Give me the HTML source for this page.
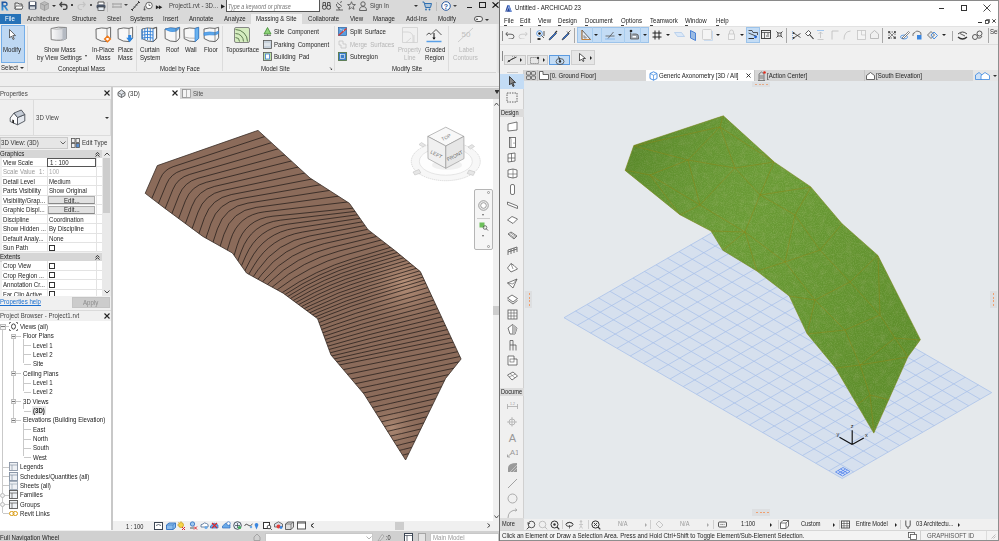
<!DOCTYPE html>
<html><head><meta charset="utf-8">
<style>
*{box-sizing:border-box;}
html,body{margin:0;padding:0;}
body{width:999px;height:541px;position:relative;overflow:hidden;background:#fff;font-family:"Liberation Sans",sans-serif;color:#222;}
.a{position:absolute;}
.t{position:absolute;white-space:pre;font-size:7px;line-height:9px;letter-spacing:0;color:#262626;transform:scaleX(.87);transform-origin:0 0;}
</style></head><body>

<!-- ================= REVIT ================= -->
<div class="a" id="rv" style="left:0;top:0;width:499px;height:541px;background:#f0f0f0;overflow:hidden;">
  <!-- title bar -->
  <div class="a" style="left:0;top:0;width:499px;height:13px;background:#d9d9d9;"></div>
  <!-- tab row -->
  <div class="a" style="left:0;top:13px;width:499px;height:11px;background:#d9d9d9;"></div>

  <!-- title bar content -->
  <svg class="a" style="left:1px;top:1px" width="8" height="10" viewBox="0 0 8 10"><defs><linearGradient id="rg" x1="0" y1="0" x2="0" y2="1"><stop offset="0" stop-color="#1b4f9c"/><stop offset="1" stop-color="#3d9be0"/></linearGradient></defs><path d="M0.5 9.5V0.5H4.5A2.6 2.6 0 0 1 4.8 5.6L7.6 9.5H5.4L3 5.8H2.4V9.5zM2.4 2.1V4.3H4.2A1.1 1.1 0 0 0 4.2 2.1z" fill="url(#rg)" fill-rule="evenodd"/></svg>
  <svg class="a" style="left:14px;top:1px" width="10" height="9" viewBox="0 0 10 9"><path d="M1 2h3l1 1h3v5H1z" fill="#e8e8e8" stroke="#555" stroke-width="1"/><path d="M2 5h7l-1 3H1z" fill="#fff" stroke="#555" stroke-width="0.8"/></svg>
  <svg class="a" style="left:28px;top:1px" width="9" height="9" viewBox="0 0 9 9"><rect x="0.5" y="0.5" width="8" height="8" rx="1" fill="#4a5568"/><rect x="2" y="1" width="5" height="3" fill="#fff"/><rect x="2" y="5.5" width="5" height="2.5" fill="#cfd5dc"/></svg>
  <svg class="a" style="left:40px;top:1px" width="9" height="10" viewBox="0 0 9 10"><path d="M4.5 0.5L8.5 2.5V7.5L4.5 9.5L0.5 7.5V2.5z" fill="#bbb" stroke="#999" stroke-width="0.6"/><path d="M4.5 4.5V9.5M0.5 2.5L4.5 4.5L8.5 2.5" stroke="#888" stroke-width="0.6" fill="none"/></svg>
  <div class="a" style="left:52px;top:5px;width:0;height:0;border-left:2px solid transparent;border-right:2px solid transparent;border-top:2px solid #333;"></div>
  <svg class="a" style="left:59px;top:1px" width="9" height="9" viewBox="0 0 9 9"><path d="M3 1L0.8 3.5L3 6M1 3.5H5.5A2.5 2.5 0 0 1 5.5 8.5H4" fill="none" stroke="#444" stroke-width="1.3"/></svg>
  <div class="a" style="left:71px;top:4px;width:2px;height:2px;background:#444;"></div>
  <svg class="a" style="left:77px;top:1px" width="9" height="9" viewBox="0 0 9 9"><path d="M6 1L8.2 3.5L6 6M8 3.5H3.5A2.5 2.5 0 0 0 3.5 8.5H5" fill="none" stroke="#c4c4c4" stroke-width="1.2"/></svg>
  <div class="a" style="left:90px;top:4px;width:2px;height:2px;background:#555;"></div>
  <svg class="a" style="left:96px;top:1px" width="10" height="10" viewBox="0 0 10 10"><path d="M2 3.5V1h6v2.5" fill="#fff" stroke="#444" stroke-width="0.9"/><rect x="0.5" y="3.5" width="9" height="4" rx="1.5" fill="#4a5568"/><rect x="2" y="6" width="6" height="3.5" fill="#e6eef6" stroke="#444" stroke-width="0.7"/></svg>
  <div class="a" style="left:107px;top:2px;width:1px;height:10px;background:#c2c2c2;"></div>
  <svg class="a" style="left:112px;top:2px" width="10" height="8" viewBox="0 0 10 8"><path d="M0 2h10M0 5h10" stroke="#999" stroke-width="1.2"/><path d="M1 1v5M9 1v5" stroke="#aaa" stroke-width="0.8"/></svg>
  <div class="a" style="left:124px;top:4px;width:0;height:0;border-left:2px solid transparent;border-right:2px solid transparent;border-top:2px solid #444;"></div>
  <svg class="a" style="left:131px;top:1px" width="9" height="10" viewBox="0 0 9 10"><path d="M1 9L8 1" stroke="#333" stroke-width="1"/><path d="M0 8l2 2M7 0l2 2M3 5.5l1 1M5 3.5l1 1" stroke="#333" stroke-width="0.9"/></svg>
  <svg class="a" style="left:143px;top:1px" width="10" height="10" viewBox="0 0 10 10"><circle cx="6" cy="4.5" r="3.3" fill="#fff" stroke="#555" stroke-width="0.9"/><path d="M6 2.5v2h1.5" stroke="#555" stroke-width="0.8" fill="none"/><path d="M2.5 4.5A3 3 0 0 0 1.5 8" stroke="#777" stroke-width="1" fill="none"/><circle cx="1.5" cy="8.5" r="1" fill="#555"/></svg>
  <div class="t" style="left:156px;top:2px;font-size:7px;font-weight:bold;color:#222">&#9656;&#9656;</div>
  <div class="t" style="left:169px;top:1px;font-size:7px;line-height:10px;color:#444;">Project1.rvt - 3D...</div>
  <div class="t" style="left:221px;top:2px;font-size:6px;color:#222">&#9654;</div>
  <div class="a" style="left:226px;top:0px;width:94px;height:12px;background:#fff;border:1px solid #555;border-top:none;"></div>
  <div class="t" style="left:228px;top:1.5px;font-size:7px;line-height:10px;color:#777;font-style:italic;transform:scaleX(.78)">Type a keyword or phrase</div>
  <svg class="a" style="left:322px;top:1px" width="9" height="9" viewBox="0 0 9 9"><circle cx="2.3" cy="6.3" r="2" fill="none" stroke="#444" stroke-width="1"/><circle cx="6.7" cy="6.3" r="2" fill="none" stroke="#444" stroke-width="1"/><path d="M1 5V1.5h2.5V5M5.5 5V1.5H8V5" fill="none" stroke="#444" stroke-width="0.9"/></svg>
  <svg class="a" style="left:335px;top:1px" width="9" height="10" viewBox="0 0 9 10"><path d="M1 9h7M4.5 9L3 6M2 1.5l5 4M1.5 3a3 3 0 0 0 4 3.5" fill="none" stroke="#555" stroke-width="0.9"/><path d="M5 1.5l2-1" stroke="#555" stroke-width="0.9"/></svg>
  <svg class="a" style="left:347px;top:1px" width="9" height="9" viewBox="0 0 10 10"><path d="M5 0.8L6.2 3.8L9.4 4L6.9 6L7.8 9.2L5 7.4L2.2 9.2L3.1 6L0.6 4L3.8 3.8z" fill="none" stroke="#555" stroke-width="0.9"/></svg>
  <svg class="a" style="left:359px;top:1px" width="8" height="10" viewBox="0 0 8 10"><circle cx="4" cy="3" r="2.2" fill="none" stroke="#555" stroke-width="0.9"/><path d="M0.5 9.5C0.5 6.5 2 5.6 4 5.6S7.5 6.5 7.5 9.5z" fill="none" stroke="#555" stroke-width="0.9"/></svg>
  <div class="t" style="left:370px;top:1px;font-size:7px;line-height:10px;color:#444;">Sign In</div>
  <div class="a" style="left:414px;top:5px;width:0;height:0;border-left:2px solid transparent;border-right:2px solid transparent;border-top:2px solid #333;"></div>
  <svg class="a" style="left:422px;top:1px" width="10" height="10" viewBox="0 0 10 10"><path d="M0.5 1h1.5l1.5 5.5h5L9.5 2.5H2.8" fill="#5a9bd8" fill-opacity="0.35" stroke="#2f6fb0" stroke-width="1"/><circle cx="4" cy="8.5" r="0.9" fill="#2f6fb0"/><circle cx="7.5" cy="8.5" r="0.9" fill="#2f6fb0"/></svg>
  <div class="a" style="left:436px;top:2px;width:1px;height:9px;background:#bdbdbd;"></div>
  <svg class="a" style="left:441px;top:1px" width="10" height="10" viewBox="0 0 10 10"><circle cx="5" cy="5" r="4.3" fill="#fff" stroke="#2a5aa0" stroke-width="1"/><text x="5" y="7.8" font-size="7" font-family="Liberation Sans" font-weight="bold" text-anchor="middle" fill="#2a5aa0">?</text></svg>
  <div class="a" style="left:453px;top:5px;width:0;height:0;border-left:2px solid transparent;border-right:2px solid transparent;border-top:2px solid #444;"></div>
  <div class="a" style="left:467px;top:6.5px;width:5px;height:1.2px;background:#222;"></div>
  <div class="a" style="left:479px;top:2px;width:6.5px;height:6px;border:0.9px solid #222;"></div>
  <svg class="a" style="left:492px;top:1.5px" width="7" height="6" viewBox="0 0 7 6"><path d="M0.5 0.3L6.5 5.7M6.5 0.3L0.5 5.7" stroke="#111" stroke-width="1.1"/></svg>

  <!-- tab row -->
  <div class="a" style="left:0;top:14px;width:21px;height:10px;background:#2672b8;"></div>
  <div class="t" style="left:5px;top:14px;font-size:7px;line-height:10px;color:#fff;letter-spacing:0">File</div>
  <div class="a" style="left:251px;top:14px;width:51px;height:11px;background:#f0f0f0;"></div>
  <div class="t" style="left:27px;top:14px;line-height:10px;">Architecture</div>
  <div class="t" style="left:72px;top:14px;line-height:10px;">Structure</div>
  <div class="t" style="left:107px;top:14px;line-height:10px;">Steel</div>
  <div class="t" style="left:130px;top:14px;line-height:10px;">Systems</div>
  <div class="t" style="left:163px;top:14px;line-height:10px;">Insert</div>
  <div class="t" style="left:189px;top:14px;line-height:10px;">Annotate</div>
  <div class="t" style="left:224px;top:14px;line-height:10px;">Analyze</div>
  <div class="t" style="left:256px;top:14px;line-height:10px;color:#222">Massing &amp; Site</div>
  <div class="t" style="left:308px;top:14px;line-height:10px;">Collaborate</div>
  <div class="t" style="left:350px;top:14px;line-height:10px;">View</div>
  <div class="t" style="left:373px;top:14px;line-height:10px;">Manage</div>
  <div class="t" style="left:406px;top:14px;line-height:10px;">Add-Ins</div>
  <div class="t" style="left:438px;top:14px;line-height:10px;">Modify</div>
  <div class="a" style="left:474px;top:16px;width:9px;height:5.5px;border:0.9px solid #555;border-radius:3px;background:#f4f4f4;"></div>
  <div class="a" style="left:476px;top:18px;width:0;height:0;border-left:1.5px solid transparent;border-right:1.5px solid transparent;border-bottom:2px solid #333;"></div>
  <div class="a" style="left:485px;top:19px;width:0;height:0;border-left:2px solid transparent;border-right:2px solid transparent;border-top:2px solid #333;"></div>
  <!-- ribbon -->
  <div class="a" style="left:0;top:24px;width:499px;height:49px;background:#f0f0f0;border-bottom:1px solid #d5d5d5;"></div>

  <!-- ribbon content -->
  <div class="a" style="left:1px;top:25px;width:24px;height:38px;background:#bed8f3;border:1px solid #74aee9;"></div>
  <svg class="a" style="left:9px;top:29px" width="7" height="11" viewBox="0 0 7 11"><path d="M0.5 0.5V9L2.5 7L4 10.5L5.2 10L3.8 6.6H6.5z" fill="#fff" stroke="#444" stroke-width="0.8"/></svg>
  <div class="t" style="left:3px;top:45px;">Modify</div>
  <div class="t" style="left:1px;top:63px;">Select</div>
  <div class="a" style="left:20px;top:67px;width:0;height:0;border-left:2px solid transparent;border-right:2px solid transparent;border-top:2.5px solid #333;"></div>
  <div class="a" style="left:27px;top:26px;width:1px;height:45px;background:#dcdcdc;"></div>
  <svg class="a" style="left:50px;top:26px" width="18" height="17" viewBox="0 0 18 17"><defs><linearGradient id="gm" x1="0" x2="1"><stop offset="0" stop-color="#fafafa"/><stop offset="1" stop-color="#c9ccd2"/></linearGradient></defs><path d="M1 2.5Q8 0.3 16.5 1.5V12.5Q12 15.5 1.2 13.6z" fill="url(#gm)" stroke="#777" stroke-width="0.9"/><path d="M12.5 2.6V15L16.5 12.5V1.5z" fill="#b5bac2"/><path d="M1.2 2.5Q6 4 12.5 2.6" fill="none" stroke="#999" stroke-width="0.6"/></svg>
  <div class="t" style="left:44px;top:45px;">Show Mass</div>
  <div class="t" style="left:37px;top:53px;">by View Settings</div>
  <div class="a" style="left:85px;top:55px;width:0;height:0;border-left:1.5px solid transparent;border-right:1.5px solid transparent;border-top:2px solid #333;"></div>
  <svg class="a" style="left:95px;top:26px" width="17" height="17" viewBox="0 0 17 17"><path d="M1 3Q6.5 1.2 12 2.4L15.6 1.3V11.8Q14.5 14.2 12 15.6Q6 16 1.2 12.6z" fill="#f7f7f7" stroke="#5a5a5a" stroke-width="0.9" stroke-linejoin="round"/><path d="M12 2.4V15.6" fill="none" stroke="#6a6a6a" stroke-width="0.7"/><path d="M12.5 10.2l2.8 2.8-2.8 2.8-2.8-2.8z" fill="#fff" stroke="#f07a1a" stroke-width="1.5"/></svg>
  <div class="t" style="left:92px;top:45px;">In-Place</div>
  <div class="t" style="left:96px;top:53px;">Mass</div>
  <svg class="a" style="left:117px;top:26px" width="17" height="17" viewBox="0 0 17 17"><path d="M1 3Q6.5 1.2 12 2.4L15.6 1.3V11.8Q14.5 14.2 12 15.6Q6 16 1.2 12.6z" fill="#f7f7f7" stroke="#5a5a5a" stroke-width="0.9" stroke-linejoin="round"/><path d="M12 2.4V15.6" fill="none" stroke="#6a6a6a" stroke-width="0.7"/><path d="M11.2 9h3V11.8h2l-3.5 4.4-3.5-4.4h2z" fill="#2f87e0"/></svg>
  <div class="t" style="left:118px;top:45px;">Place</div>
  <div class="t" style="left:118px;top:53px;">Mass</div>
  <div class="t" style="left:58px;top:64px;">Conceptual Mass</div>
  <div class="a" style="left:136px;top:26px;width:1px;height:45px;background:#dcdcdc;"></div>
  <svg class="a" style="left:141px;top:26px" width="17" height="17" viewBox="0 0 17 17"><path d="M1 3Q6.5 1.2 12 2.4L15.6 1.3V11.8Q14.5 14.2 12 15.6Q6 16 1.2 12.6z" fill="#f7f7f7" stroke="#5a5a5a" stroke-width="0.9" stroke-linejoin="round"/><path d="M3.8 2.3V14M6.5 1.9V14.2M9.3 2.1V14.8M1 6.2Q6.5 4.5 12 5.8M1 9.2Q6.5 7.8 12 9M1 12Q6.5 10.8 12 12" fill="none" stroke="#2f7fd8" stroke-width="0.9"/><path d="M1 3.2V13.6M12 2.6V15.6" stroke="#2f7fd8" stroke-width="1"/><path d="M12 2.6L15.6 1.4V12.6L12 15.6" fill="none" stroke="#5a5a5a" stroke-width="0.8"/></svg>
  <svg class="a" style="left:164px;top:26px" width="17" height="17" viewBox="0 0 17 17"><path d="M1 3Q6.5 1.2 12 2.4L15.6 1.3V11.8Q14.5 14.2 12 15.6Q6 16 1.2 12.6z" fill="#f7f7f7" stroke="#5a5a5a" stroke-width="0.9" stroke-linejoin="round"/><path d="M1 3.2Q6.5 1 12 2.6L15.6 1.4Q13.5 4.8 12 5.2Q6.5 6.8 1 3.2z" fill="#5aa7ea" stroke="#2f7fd8" stroke-width="0.6"/><path d="M12 2.4V15.6" fill="none" stroke="#6a6a6a" stroke-width="0.7"/></svg>
  <svg class="a" style="left:183px;top:26px" width="17" height="17" viewBox="0 0 17 17"><path d="M1 3Q6.5 1.2 12 2.4L15.6 1.3V11.8Q14.5 14.2 12 15.6Q6 16 1.2 12.6z" fill="#f7f7f7" stroke="#5a5a5a" stroke-width="0.9" stroke-linejoin="round"/><path d="M12 2.6L15.6 1.4V12.6L12 15.6z" fill="#6ab2ee" stroke="#2f7fd8" stroke-width="0.7"/><path d="M1.2 11Q6.5 12.6 12 12.2" fill="none" stroke="#8a8a8a" stroke-width="0.6"/></svg>
  <svg class="a" style="left:203px;top:26px" width="17" height="17" viewBox="0 0 17 17"><path d="M1 3Q6.5 1.2 12 2.4L15.6 1.3V11.8Q14.5 14.2 12 15.6Q6 16 1.2 12.6z" fill="#f7f7f7" stroke="#5a5a5a" stroke-width="0.9" stroke-linejoin="round"/><path d="M1 6.8Q6.5 5.2 12 6.6L15.6 5.2V7.4L12 9Q6.5 8.4 1 9.4z" fill="#5aa7ea" stroke="#2f7fd8" stroke-width="0.6"/><path d="M12 2.4V15.6" fill="none" stroke="#6a6a6a" stroke-width="0.7"/></svg>
  <div class="t" style="left:140px;top:45px;">Curtain</div>
  <div class="t" style="left:140px;top:53px;">System</div>
  <div class="t" style="left:166px;top:45px;">Roof</div>
  <div class="t" style="left:185px;top:45px;">Wall</div>
  <div class="t" style="left:204px;top:45px;">Floor</div>
  <div class="t" style="left:160px;top:64px;">Model by Face</div>
  <div class="a" style="left:222px;top:26px;width:1px;height:45px;background:#dcdcdc;"></div>
  <svg class="a" style="left:234px;top:27px" width="16" height="16" viewBox="0 0 16 16"><rect x="0.5" y="0.5" width="15" height="15" rx="1.5" fill="#d5ecc0" stroke="#7a7a7a" stroke-width="0.9"/><path d="M1.5 10.5A4 4 0 0 1 5.5 14.5M1.5 6.5A8 8 0 0 1 9.5 14.5M1.5 2.5A12 12 0 0 1 13.5 14.5" fill="none" stroke="#5f7d52" stroke-width="1"/></svg>
  <div class="t" style="left:226px;top:45px;">Toposurface</div>
  <svg class="a" style="left:263px;top:27px" width="9" height="9" viewBox="0 0 9 9"><path d="M4.5 0.5L8 7H1z" fill="#8fd27a" stroke="#3c8a2e" stroke-width="0.8"/><path d="M4.5 7V8.8M1 8.5h7" stroke="#555" stroke-width="0.7"/></svg>
  <svg class="a" style="left:263px;top:40px" width="9" height="9" viewBox="0 0 9 9"><rect x="0.5" y="0.5" width="8" height="8" fill="#c8d2dc" stroke="#555" stroke-width="0.8"/><path d="M2 3v3M4 3v3M6 3v3" stroke="#fff" stroke-width="0.8"/></svg>
  <svg class="a" style="left:263px;top:52px" width="9" height="9" viewBox="0 0 9 9"><rect x="0.5" y="0.5" width="8" height="8" fill="#bfe3a8" stroke="#555" stroke-width="0.8"/><rect x="2.5" y="2" width="4" height="5" fill="#fff" stroke="#3a7bd5" stroke-width="0.8"/></svg>
  <div class="t" style="left:274px;top:27px;word-spacing:1.5px">Site Component</div>
  <div class="t" style="left:274px;top:40px;word-spacing:1.5px">Parking Component</div>
  <div class="t" style="left:274px;top:52px;word-spacing:1.5px">Building Pad</div>
  <div class="t" style="left:261px;top:64px;">Model Site</div>
  <div class="t" style="left:329px;top:64px;font-size:5px;">&#8600;</div>
  <div class="a" style="left:334px;top:26px;width:1px;height:45px;background:#dcdcdc;"></div>
  <svg class="a" style="left:338px;top:27px" width="9" height="9" viewBox="0 0 9 9"><rect x="0.5" y="0.5" width="8" height="8" fill="#5a9fe0" stroke="#2a5f9e" stroke-width="0.7"/><path d="M0.5 8.5L8.5 1.5" stroke="#e0392a" stroke-width="1.2"/><path d="M2 2l2 1M5 2.5l1 2" stroke="#fff" stroke-width="0.6"/></svg>
  <svg class="a" style="left:338px;top:40px" width="9" height="9" viewBox="0 0 9 9"><path d="M1 1h4v3H8v4H3V5H1z" fill="none" stroke="#c8c8c8" stroke-width="0.9"/></svg>
  <svg class="a" style="left:338px;top:52px" width="9" height="9" viewBox="0 0 9 9"><rect x="0.5" y="0.5" width="8" height="8" fill="#3d7fc8" stroke="#5a7a4a" stroke-width="0.9"/><rect x="2.5" y="2.5" width="4" height="4" fill="none" stroke="#fff" stroke-width="0.6"/></svg>
  <div class="t" style="left:350px;top:27px;word-spacing:1.5px">Split Surface</div>
  <div class="t" style="left:350px;top:40px;word-spacing:1.5px;color:#b5b5b5">Merge Surfaces</div>
  <div class="t" style="left:350px;top:52px;">Subregion</div>
  <svg class="a" style="left:402px;top:27px" width="16" height="16" viewBox="0 0 16 16"><path d="M0.5 0.5H15.5V15.5H0.5z" fill="none" stroke="#cfcfcf" stroke-width="0.8"/><path d="M0.5 5H6A5 5 0 0 1 11 10V15.5M4 15.5L9 11M12 8V15.5" fill="none" stroke="#cfcfcf" stroke-width="0.8"/></svg>
  <div class="t" style="left:398px;top:45px;color:#b8b8b8">Property</div>
  <div class="t" style="left:404px;top:53px;color:#b8b8b8">Line</div>
  <svg class="a" style="left:426px;top:28px" width="16" height="15" viewBox="0 0 16 15"><path d="M0.5 7L3 5L5 6.5L10 1.5L15.5 7" fill="none" stroke="#444" stroke-width="0.9"/><path d="M8 5V11" stroke="#111" stroke-width="1"/><path d="M6.3 9.5L8 11.8L9.7 9.5z" fill="#111"/><path d="M0.5 13.5H15.5" stroke="#5aa0e8" stroke-width="1.5"/></svg>
  <div class="t" style="left:425px;top:45px;">Graded</div>
  <div class="t" style="left:425px;top:53px;">Region</div>
  <div class="t" style="left:392px;top:64px;">Modify Site</div>
  <div class="a" style="left:448px;top:26px;width:1px;height:45px;background:#dcdcdc;"></div>
  <svg class="a" style="left:457px;top:27px" width="17" height="16" viewBox="0 0 17 16"><path d="M1 15L16 1" stroke="#c8c8c8" stroke-width="0.9"/><text x="9" y="10" font-size="8" font-family="Liberation Sans" text-anchor="middle" fill="#c0c0c0">50</text></svg>
  <div class="t" style="left:459px;top:45px;color:#b8b8b8">Label</div>
  <div class="t" style="left:453px;top:53px;color:#b8b8b8">Contours</div>
  <div class="a" style="left:496px;top:24px;width:3px;height:49px;background:linear-gradient(90deg,#f0f0f0,#dedede);"></div>
  <!-- band -->
  <div class="a" style="left:0;top:73px;width:499px;height:14px;background:#eeeeee;border-bottom:1px solid #cfcfcf;"></div>
  <!-- properties -->
  <div class="a" style="left:0;top:87px;width:112px;height:443px;background:#f0f0f0;"></div>
  <!-- project browser body -->
  <div class="a" style="left:0;top:321px;width:111px;height:209px;background:#fff;"></div>

  <!-- properties header -->
  <div class="t" style="left:0;top:89px;line-height:10px;color:#444">Properties</div>
  <svg class="a" style="left:104px;top:90px" width="6" height="6" viewBox="0 0 6 6"><path d="M0.5 0.5L5.5 5.5M5.5 0.5L0.5 5.5" stroke="#222" stroke-width="1.1"/></svg>
  <div class="a" style="left:0;top:99px;width:111px;height:37px;border:1px solid #dcdcdc;background:#f0f0f0;"></div>
  <div class="a" style="left:0;top:100px;width:34px;height:35px;border-right:1px solid #dcdcdc;background:#efefef;"></div>
  <svg class="a" style="left:9px;top:109px" width="17" height="17" viewBox="0 0 17 17"><path d="M8.5 8.5L15.8 5.5V12L8.5 15.8z" fill="#e4e8ee" stroke="#4a4f57" stroke-width="0.9" stroke-linejoin="round"/><path d="M1.2 9L5 4L8.5 8.5V15.8L1.2 12.5z" fill="#fbfbfc" stroke="#4a4f57" stroke-width="0.9" stroke-linejoin="round"/><path d="M5 4L12.3 1L15.8 5.5L8.5 8.5z" fill="#c5ccd6" stroke="#4a4f57" stroke-width="0.9" stroke-linejoin="round"/><path d="M3.3 10.5L5 11.2V14.5L3.3 13.7z" fill="#222"/></svg>
  <div class="t" style="left:36px;top:113px;color:#444">3D View</div>
  <div class="a" style="left:105px;top:117px;width:0;height:0;border-left:2px solid transparent;border-right:2px solid transparent;border-top:2.5px solid #333;"></div>
  <div class="a" style="left:0;top:137px;width:68px;height:12px;background:#e6e6e6;border:1px solid #c9c9c9;"></div>
  <div class="t" style="left:1px;top:138px;line-height:10px;color:#333">3D View: (3D)</div>
  <svg class="a" style="left:60px;top:141px" width="6" height="4" viewBox="0 0 6 4"><path d="M0.5 0.5L3 3L5.5 0.5" fill="none" stroke="#555" stroke-width="0.9"/></svg>
  <svg class="a" style="left:71px;top:138px" width="9" height="10" viewBox="0 0 9 10"><rect x="0.5" y="0.5" width="3.5" height="4" fill="none" stroke="#555" stroke-width="0.8"/><rect x="5" y="0.5" width="3.5" height="4" fill="none" stroke="#555" stroke-width="0.8"/><rect x="0.5" y="5.5" width="3.5" height="4" fill="none" stroke="#555" stroke-width="0.8"/><rect x="5" y="5.5" width="3.5" height="4" fill="#5b8fd0" stroke="#555" stroke-width="0.8"/></svg>
  <div class="t" style="left:82px;top:138px;line-height:10px;color:#333">Edit Type</div>
  <!-- grid -->
  <div class="a" style="left:0;top:150px;width:102px;height:146px;background:#f0f0f0;"></div>
  <div class="a" style="left:0;top:150px;width:102px;height:8px;background:#d6d6d6;"></div>
  <div class="t" style="left:0;top:149px;color:#222">Graphics</div>
  <svg class="a" style="left:95px;top:151.5px" width="5" height="5" viewBox="0 0 5 5"><path d="M0.5 2.3L2.5 0.5L4.5 2.3M0.5 4.5L2.5 2.7L4.5 4.5" fill="none" stroke="#222" stroke-width="0.9"/></svg>
  <div class="a" style="left:2px;top:158.0px;width:100px;height:9.45px;background:#fff;border-bottom:1px solid #e3e3e3;"></div>
  <div class="a" style="left:47px;top:158.0px;width:1px;height:9.45px;background:#e3e3e3;"></div>
  <div class="a" style="left:96px;top:158.0px;width:1px;height:9.45px;background:#e3e3e3;"></div>
  <div class="t" style="left:3px;top:158.0px;color:#222">View Scale</div>
  <div class="a" style="left:47px;top:158.0px;width:49px;height:9.45px;border:1px solid #555;background:#fff;"></div>
  <div class="t" style="left:50px;top:158.0px;">1 : 100</div>
  <div class="a" style="left:2px;top:167.4px;width:100px;height:9.45px;background:#fff;border-bottom:1px solid #e3e3e3;"></div>
  <div class="a" style="left:47px;top:167.4px;width:1px;height:9.45px;background:#e3e3e3;"></div>
  <div class="a" style="left:96px;top:167.4px;width:1px;height:9.45px;background:#e3e3e3;"></div>
  <div class="t" style="left:3px;top:167.4px;color:#999">Scale Value</div><div class="t" style="left:39px;top:167.4px;color:#999">1:</div>
  <div class="t" style="left:49px;top:167.4px;color:#aaa">100</div>
  <div class="a" style="left:2px;top:176.9px;width:100px;height:9.45px;background:#fff;border-bottom:1px solid #e3e3e3;"></div>
  <div class="a" style="left:47px;top:176.9px;width:1px;height:9.45px;background:#e3e3e3;"></div>
  <div class="a" style="left:96px;top:176.9px;width:1px;height:9.45px;background:#e3e3e3;"></div>
  <div class="t" style="left:3px;top:176.9px;color:#222">Detail Level</div>
  <div class="t" style="left:49px;top:176.9px;">Medium</div>
  <div class="a" style="left:2px;top:186.3px;width:100px;height:9.45px;background:#fff;border-bottom:1px solid #e3e3e3;"></div>
  <div class="a" style="left:47px;top:186.3px;width:1px;height:9.45px;background:#e3e3e3;"></div>
  <div class="a" style="left:96px;top:186.3px;width:1px;height:9.45px;background:#e3e3e3;"></div>
  <div class="t" style="left:3px;top:186.3px;color:#222">Parts Visibility</div>
  <div class="t" style="left:49px;top:186.3px;">Show Original</div>
  <div class="a" style="left:2px;top:195.8px;width:100px;height:9.45px;background:#fff;border-bottom:1px solid #e3e3e3;"></div>
  <div class="a" style="left:47px;top:195.8px;width:1px;height:9.45px;background:#e3e3e3;"></div>
  <div class="a" style="left:96px;top:195.8px;width:1px;height:9.45px;background:#e3e3e3;"></div>
  <div class="t" style="left:3px;top:195.8px;color:#222">Visibility/Grap...</div>
  <div class="a" style="left:48px;top:196.3px;width:47px;height:8px;background:#e1e1e1;border:1px solid #adadad;border-bottom-color:#888;"></div>
  <div class="t" style="left:64px;top:195.5px;">Edit...</div>
  <div class="a" style="left:2px;top:205.2px;width:100px;height:9.45px;background:#fff;border-bottom:1px solid #e3e3e3;"></div>
  <div class="a" style="left:47px;top:205.2px;width:1px;height:9.45px;background:#e3e3e3;"></div>
  <div class="a" style="left:96px;top:205.2px;width:1px;height:9.45px;background:#e3e3e3;"></div>
  <div class="t" style="left:3px;top:205.2px;color:#222">Graphic Displ...</div>
  <div class="a" style="left:48px;top:205.7px;width:47px;height:8px;background:#e1e1e1;border:1px solid #adadad;border-bottom-color:#888;"></div>
  <div class="t" style="left:64px;top:204.9px;">Edit...</div>
  <div class="a" style="left:2px;top:214.7px;width:100px;height:9.45px;background:#fff;border-bottom:1px solid #e3e3e3;"></div>
  <div class="a" style="left:47px;top:214.7px;width:1px;height:9.45px;background:#e3e3e3;"></div>
  <div class="a" style="left:96px;top:214.7px;width:1px;height:9.45px;background:#e3e3e3;"></div>
  <div class="t" style="left:3px;top:214.7px;color:#222">Discipline</div>
  <div class="t" style="left:49px;top:214.7px;">Coordination</div>
  <div class="a" style="left:2px;top:224.1px;width:100px;height:9.45px;background:#fff;border-bottom:1px solid #e3e3e3;"></div>
  <div class="a" style="left:47px;top:224.1px;width:1px;height:9.45px;background:#e3e3e3;"></div>
  <div class="a" style="left:96px;top:224.1px;width:1px;height:9.45px;background:#e3e3e3;"></div>
  <div class="t" style="left:3px;top:224.1px;color:#222">Show Hidden ...</div>
  <div class="t" style="left:49px;top:224.1px;">By Discipline</div>
  <div class="a" style="left:2px;top:233.6px;width:100px;height:9.45px;background:#fff;border-bottom:1px solid #e3e3e3;"></div>
  <div class="a" style="left:47px;top:233.6px;width:1px;height:9.45px;background:#e3e3e3;"></div>
  <div class="a" style="left:96px;top:233.6px;width:1px;height:9.45px;background:#e3e3e3;"></div>
  <div class="t" style="left:3px;top:233.6px;color:#222">Default Analy...</div>
  <div class="t" style="left:49px;top:233.6px;">None</div>
  <div class="a" style="left:2px;top:243.0px;width:100px;height:9.45px;background:#fff;border-bottom:1px solid #e3e3e3;"></div>
  <div class="a" style="left:47px;top:243.0px;width:1px;height:9.45px;background:#e3e3e3;"></div>
  <div class="a" style="left:96px;top:243.0px;width:1px;height:9.45px;background:#e3e3e3;"></div>
  <div class="t" style="left:3px;top:243.0px;color:#222">Sun Path</div>
  <div class="a" style="left:49px;top:244.5px;width:6px;height:6px;border:1px solid #333;background:#fff;"></div>
  <div class="a" style="left:0;top:252.5px;width:102px;height:9px;background:#d6d6d6;"></div>
  <div class="t" style="left:0;top:252.0px;color:#222">Extents</div>
  <svg class="a" style="left:95px;top:254.5px" width="5" height="5" viewBox="0 0 5 5"><path d="M0.5 2.3L2.5 0.5L4.5 2.3M0.5 4.5L2.5 2.7L4.5 4.5" fill="none" stroke="#222" stroke-width="0.9"/></svg>
  <div class="a" style="left:2px;top:261.3px;width:100px;height:9.45px;background:#fff;border-bottom:1px solid #e3e3e3;"></div>
  <div class="a" style="left:47px;top:261.3px;width:1px;height:9.45px;background:#e3e3e3;"></div>
  <div class="a" style="left:96px;top:261.3px;width:1px;height:9.45px;background:#e3e3e3;"></div>
  <div class="t" style="left:3px;top:261.3px;color:#222">Crop View</div>
  <div class="a" style="left:49px;top:262.8px;width:6px;height:6px;border:1px solid #333;background:#fff;"></div>
  <div class="a" style="left:2px;top:270.7px;width:100px;height:9.45px;background:#fff;border-bottom:1px solid #e3e3e3;"></div>
  <div class="a" style="left:47px;top:270.7px;width:1px;height:9.45px;background:#e3e3e3;"></div>
  <div class="a" style="left:96px;top:270.7px;width:1px;height:9.45px;background:#e3e3e3;"></div>
  <div class="t" style="left:3px;top:270.7px;color:#222">Crop Region ...</div>
  <div class="a" style="left:49px;top:272.2px;width:6px;height:6px;border:1px solid #333;background:#fff;"></div>
  <div class="a" style="left:2px;top:280.2px;width:100px;height:9.45px;background:#fff;border-bottom:1px solid #e3e3e3;"></div>
  <div class="a" style="left:47px;top:280.2px;width:1px;height:9.45px;background:#e3e3e3;"></div>
  <div class="a" style="left:96px;top:280.2px;width:1px;height:9.45px;background:#e3e3e3;"></div>
  <div class="t" style="left:3px;top:280.2px;color:#222">Annotation Cr...</div>
  <div class="a" style="left:49px;top:281.7px;width:6px;height:6px;border:1px solid #333;background:#fff;"></div>
  <div class="a" style="left:2px;top:289.6px;width:100px;height:9.45px;background:#fff;border-bottom:1px solid #e3e3e3;"></div>
  <div class="a" style="left:47px;top:289.6px;width:1px;height:9.45px;background:#e3e3e3;"></div>
  <div class="a" style="left:96px;top:289.6px;width:1px;height:9.45px;background:#e3e3e3;"></div>
  <div class="t" style="left:3px;top:289.6px;color:#222">Far Clip Active</div>
  <div class="a" style="left:49px;top:291.1px;width:6px;height:6px;border:1px solid #333;background:#fff;"></div>
  <div class="a" style="left:102px;top:150px;width:9px;height:146px;background:#e9e9e9;"></div>
  <div class="a" style="left:103px;top:158px;width:7px;height:55px;background:#cdcdcd;"></div>
  <svg class="a" style="left:104px;top:152px" width="6" height="4" viewBox="0 0 6 4"><path d="M0.5 3.5L3 1L5.5 3.5" fill="none" stroke="#333" stroke-width="0.9"/></svg>
  <svg class="a" style="left:104px;top:290px" width="6" height="4" viewBox="0 0 6 4"><path d="M0.5 0.5L3 3L5.5 0.5" fill="none" stroke="#333" stroke-width="0.9"/></svg>
  <div class="a" style="left:0;top:296px;width:111px;height:14px;background:#f0f0f0;"></div>
  <div class="t" style="left:0;top:297px;line-height:10px;color:#1a6fd0;text-decoration:underline">Properties help</div>
  <div class="a" style="left:72px;top:297px;width:38px;height:11px;background:#cccccc;border:1px solid #c4c4c4;"></div>
  <div class="t" style="left:83px;top:297.5px;line-height:10px;color:#8a8a8a">Apply</div>
  <div class="a" style="left:0;top:310px;width:111px;height:1px;background:#dadada;"></div>
  <div class="t" style="left:0;top:311px;line-height:10px;color:#444">Project Browser - Project1.rvt</div>
  <svg class="a" style="left:104px;top:313px" width="6" height="6" viewBox="0 0 6 6"><path d="M0.5 0.5L5.5 5.5M5.5 0.5L0.5 5.5" stroke="#222" stroke-width="1.1"/></svg>
  <!-- tree -->
  <div class="a" style="left:2px;top:330px;width:1px;height:183px;background:#c9c9c9;"></div>
  <div class="a" style="left:13px;top:339px;width:1px;height:80px;background:#c9c9c9;"></div>
  <div class="a" style="left:23px;top:339px;width:1px;height:24px;background:#c9c9c9;"></div>
  <div class="a" style="left:23px;top:376px;width:1px;height:15px;background:#c9c9c9;"></div>
  <div class="a" style="left:23px;top:404px;width:1px;height:5px;background:#c9c9c9;"></div>
  <div class="a" style="left:23px;top:423px;width:1px;height:33px;background:#c9c9c9;"></div>
  <div class="a" style="left:3px;top:326.4px;width:6px;height:1px;background:#c9c9c9;"></div>
  <div class="a" style="left:0px;top:323.9px;width:6px;height:6px;background:#f4f4f4;border:1px solid #bdbdbd;"></div><div class="a" style="left:1px;top:326.4px;width:4px;height:1px;background:#777;"></div>
  <svg class="a" style="left:9px;top:322.4px" width="9" height="9" viewBox="0 0 9 9"><path d="M0.5 2V0.5H2M7 0.5H8.5V2M8.5 7V8.5H7M2 8.5H0.5V7" fill="none" stroke="#555" stroke-width="0.8"/><ellipse cx="4.5" cy="4.5" rx="2" ry="2.6" fill="none" stroke="#333" stroke-width="0.9"/></svg>
  <div class="t" style="left:20px;top:321.9px;color:#222">Views (all)</div>
  <div class="a" style="left:13px;top:335.8px;width:8px;height:1px;background:#c9c9c9;"></div>
  <div class="a" style="left:11px;top:333.8px;width:5px;height:5px;background:#f4f4f4;border:1px solid #bdbdbd;"></div><div class="a" style="left:12px;top:335.8px;width:3px;height:1px;background:#777;"></div>
  <div class="t" style="left:22.5px;top:331.2px;color:#222">Floor Plans</div>
  <div class="a" style="left:24px;top:345.1px;width:7px;height:1px;background:#c9c9c9;"></div>
  <div class="t" style="left:33px;top:340.6px;color:#222">Level 1</div>
  <div class="a" style="left:24px;top:354.4px;width:7px;height:1px;background:#c9c9c9;"></div>
  <div class="t" style="left:33px;top:349.9px;color:#222">Level 2</div>
  <div class="a" style="left:24px;top:363.8px;width:7px;height:1px;background:#c9c9c9;"></div>
  <div class="t" style="left:33px;top:359.3px;color:#222">Site</div>
  <div class="a" style="left:13px;top:373.1px;width:8px;height:1px;background:#c9c9c9;"></div>
  <div class="a" style="left:11px;top:371.1px;width:5px;height:5px;background:#f4f4f4;border:1px solid #bdbdbd;"></div><div class="a" style="left:12px;top:373.1px;width:3px;height:1px;background:#777;"></div>
  <div class="t" style="left:22.5px;top:368.6px;color:#222">Ceiling Plans</div>
  <div class="a" style="left:24px;top:382.5px;width:7px;height:1px;background:#c9c9c9;"></div>
  <div class="t" style="left:33px;top:378.0px;color:#222">Level 1</div>
  <div class="a" style="left:24px;top:391.8px;width:7px;height:1px;background:#c9c9c9;"></div>
  <div class="t" style="left:33px;top:387.3px;color:#222">Level 2</div>
  <div class="a" style="left:13px;top:401.2px;width:8px;height:1px;background:#c9c9c9;"></div>
  <div class="a" style="left:11px;top:399.2px;width:5px;height:5px;background:#f4f4f4;border:1px solid #bdbdbd;"></div><div class="a" style="left:12px;top:401.2px;width:3px;height:1px;background:#777;"></div>
  <div class="t" style="left:22.5px;top:396.7px;color:#222">3D Views</div>
  <div class="a" style="left:24px;top:410.5px;width:7px;height:1px;background:#c9c9c9;"></div>
  <div class="a" style="left:32px;top:406.0px;width:14px;height:9px;background:#e8e8e8;"></div>
  <div class="t" style="left:33px;top:406.0px;font-weight:bold;color:#222">(3D)</div>
  <div class="a" style="left:13px;top:419.9px;width:8px;height:1px;background:#c9c9c9;"></div>
  <div class="a" style="left:11px;top:417.9px;width:5px;height:5px;background:#f4f4f4;border:1px solid #bdbdbd;"></div><div class="a" style="left:12px;top:419.9px;width:3px;height:1px;background:#777;"></div>
  <div class="t" style="left:22.5px;top:415.4px;color:#222">Elevations (Building Elevation)</div>
  <div class="a" style="left:24px;top:429.2px;width:7px;height:1px;background:#c9c9c9;"></div>
  <div class="t" style="left:33px;top:424.8px;color:#222">East</div>
  <div class="a" style="left:24px;top:438.6px;width:7px;height:1px;background:#c9c9c9;"></div>
  <div class="t" style="left:33px;top:434.1px;color:#222">North</div>
  <div class="a" style="left:24px;top:447.9px;width:7px;height:1px;background:#c9c9c9;"></div>
  <div class="t" style="left:33px;top:443.4px;color:#222">South</div>
  <div class="a" style="left:24px;top:457.3px;width:7px;height:1px;background:#c9c9c9;"></div>
  <div class="t" style="left:33px;top:452.8px;color:#222">West</div>
  <div class="a" style="left:3px;top:466.6px;width:6px;height:1px;background:#c9c9c9;"></div>
  <svg class="a" style="left:9px;top:462.1px" width="9" height="9" viewBox="0 0 9 9"><rect x="0.5" y="0.5" width="8" height="8" fill="#eef1f5" stroke="#8a96a6" stroke-width="0.9"/><path d="M0.5 3H8.5M3 3V8.5" stroke="#8a96a6" stroke-width="0.7"/></svg>
  <div class="t" style="left:20px;top:462.1px;color:#222">Legends</div>
  <div class="a" style="left:3px;top:476.0px;width:6px;height:1px;background:#c9c9c9;"></div>
  <svg class="a" style="left:9px;top:471.5px" width="9" height="9" viewBox="0 0 9 9"><rect x="0.5" y="0.5" width="8" height="8" fill="#eef1f5" stroke="#7f8ea0" stroke-width="0.9"/><path d="M0.5 3H8.5M3 3V8.5" stroke="#7f8ea0" stroke-width="0.7"/></svg>
  <div class="t" style="left:20px;top:471.5px;color:#222">Schedules/Quantities (all)</div>
  <div class="a" style="left:3px;top:485.3px;width:6px;height:1px;background:#c9c9c9;"></div>
  <svg class="a" style="left:9px;top:480.8px" width="9" height="9" viewBox="0 0 9 9"><rect x="0.5" y="0.5" width="8" height="8" fill="#eef1f5" stroke="#9aa6b4" stroke-width="0.9"/><path d="M0.5 3H8.5M3 3V8.5" stroke="#9aa6b4" stroke-width="0.7"/></svg>
  <div class="t" style="left:20px;top:480.8px;color:#222">Sheets (all)</div>
  <div class="a" style="left:3px;top:494.7px;width:6px;height:1px;background:#c9c9c9;"></div>
  <svg class="a" style="left:9px;top:490.2px" width="9" height="9" viewBox="0 0 9 9"><rect x="0.5" y="0.5" width="8" height="8" fill="#eef1f5" stroke="#555" stroke-width="0.9"/><path d="M0.5 3H8.5M3 3V8.5" stroke="#555" stroke-width="0.7"/></svg>
  <div class="a" style="left:0px;top:492.7px;width:5px;height:5px;background:#f4f4f4;border:1px solid #bdbdbd;border-radius:50%;"></div>
  <div class="t" style="left:20px;top:490.2px;color:#222">Families</div>
  <div class="a" style="left:3px;top:504.0px;width:6px;height:1px;background:#c9c9c9;"></div>
  <svg class="a" style="left:9px;top:499.5px" width="9" height="9" viewBox="0 0 9 9"><rect x="0.5" y="0.5" width="8" height="8" fill="#eef1f5" stroke="#555" stroke-width="0.9"/><path d="M0.5 3H8.5M3 3V8.5" stroke="#555" stroke-width="0.7"/></svg>
  <div class="a" style="left:0px;top:502.0px;width:5px;height:5px;background:#f4f4f4;border:1px solid #bdbdbd;border-radius:50%;"></div>
  <div class="t" style="left:20px;top:499.5px;color:#222">Groups</div>
  <div class="a" style="left:3px;top:513.4px;width:6px;height:1px;background:#c9c9c9;"></div>
  <svg class="a" style="left:9px;top:510.9px" width="9" height="5" viewBox="0 0 9 5"><rect x="0.5" y="0.5" width="4.5" height="4" rx="2" fill="none" stroke="#d89a10" stroke-width="1"/><rect x="4" y="0.5" width="4.5" height="4" rx="2" fill="none" stroke="#d89a10" stroke-width="1"/></svg>
  <div class="t" style="left:20px;top:508.9px;color:#222">Revit Links</div>
  <div class="a" style="left:111px;top:87px;width:2px;height:443px;background:#c8c8c8;"></div>
  <!-- view tabs -->
  <div class="a" style="left:113px;top:88px;width:386px;height:11px;background:#cbcbcb;"></div>
  <div class="a" style="left:113px;top:88px;width:67px;height:11px;background:#fff;"></div>
  <div class="a" style="left:180px;top:88px;width:60px;height:11px;background:#d6d6d6;"></div>
  <!-- view area -->
  <div class="a" style="left:113px;top:99px;width:380px;height:422px;background:#fff;"></div>
  <div class="a" style="left:493px;top:99px;width:6px;height:422px;background:#f0f0f0;"></div>
  <!--TERRAIN_RV--><svg class="a" style="left:0;top:0" width="499" height="541" viewBox="0 0 499 541">
<defs><clipPath id="tc"><polygon points="258.0,130.4 310.0,178.0 349.4,203.3 368.0,229.7 395.8,251.3 420.3,271.6 461.1,359.0 445.6,378.4 405.6,460.0 364.0,394.0 331.0,355.0 317.6,318.7 283.2,293.2 246.5,273.0 232.4,253.0 202.8,236.4 164.0,207.7 145.2,193.3 157.3,165.6"/></clipPath>
<radialGradient id="tg1" cx="405" cy="283" r="50" gradientUnits="userSpaceOnUse"><stop offset="0" stop-color="#b8927a"/><stop offset="1" stop-color="#8b6b5a" stop-opacity="0"/></radialGradient>
<radialGradient id="tg2" cx="392" cy="428" r="32" gradientUnits="userSpaceOnUse"><stop offset="0" stop-color="#ad8a74"/><stop offset="1" stop-color="#8b6b5a" stop-opacity="0"/></radialGradient>
</defs>
<polygon points="258.0,130.4 310.0,178.0 349.4,203.3 368.0,229.7 395.8,251.3 420.3,271.6 461.1,359.0 445.6,378.4 405.6,460.0 364.0,394.0 331.0,355.0 317.6,318.7 283.2,293.2 246.5,273.0 232.4,253.0 202.8,236.4 164.0,207.7 145.2,193.3 157.3,165.6" fill="#8b6b5a"/>
<g clip-path="url(#tc)"><rect x="0" y="0" width="499" height="541" fill="url(#tg1)"/><rect x="0" y="0" width="499" height="541" fill="url(#tg2)"/>
<path d="M117.0 280.1L160.3 178.5Q164.0 169.7 173.1 166.7L373.0 100.9 M124.8 284.7L166.5 184.0Q170.8 173.8 181.4 170.5L381.0 108.8 M132.6 289.2L172.8 189.6Q177.5 177.9 189.7 174.4L388.9 116.7 M140.4 293.7L179.1 195.2Q184.3 182.0 197.9 178.3L396.7 124.7 M148.1 298.2L185.4 200.8Q191.0 186.1 206.3 182.3L404.4 132.7 M155.9 302.7L191.8 206.4Q197.8 190.2 214.6 186.4L412.1 140.7 M163.7 307.2L198.1 212.0Q204.5 194.4 222.9 190.5L419.7 148.7 M171.5 311.7L204.5 217.6Q211.3 198.5 231.2 194.6L427.3 156.8 M179.3 316.2L211.0 223.2Q218.0 202.6 239.5 198.8L434.8 164.9 M187.1 320.6L217.4 228.9Q224.8 206.7 247.9 203.1L442.2 172.9 M194.9 325.1L223.9 234.5Q231.5 210.8 256.2 207.4L449.5 181.0 M202.7 329.5L230.4 240.2Q238.3 214.9 264.5 211.8L456.7 189.1 M210.5 333.9L237.0 245.8Q245.0 219.0 272.9 216.2L463.9 197.1 M210.3 336.4L241.4 251.0Q251.4 223.6 280.3 220.2L469.9 197.9 M210.0 338.4L245.7 256.0Q257.7 228.3 287.6 224.2L475.7 198.8 M209.7 339.9L249.9 260.8Q264.1 232.9 295.0 228.2L481.6 199.6 M209.4 340.9L254.0 265.4Q270.5 237.5 302.4 232.1L487.3 200.5 M209.3 341.4L258.0 269.8Q276.8 242.2 309.7 236.0L493.0 201.3 M209.5 341.5L262.0 274.1Q283.2 246.8 317.0 239.8L498.6 202.2 M210.0 341.3L265.9 278.1Q289.5 251.5 324.3 243.6L504.2 203.1 M210.9 340.8L269.9 282.0Q295.9 256.1 331.6 247.4L509.6 204.0 M212.2 340.0L273.9 285.7Q302.3 260.7 338.9 251.1L515.1 204.9 M214.0 339.1L277.9 289.3Q308.6 265.4 346.1 254.8L520.4 205.8 M216.2 338.2L282.1 292.7Q315.0 270.0 353.3 258.5L525.7 206.8 M217.9 339.2L285.5 294.3Q317.8 272.7 355.0 261.6L528.5 209.5 M219.6 340.2L288.9 295.8Q320.6 275.5 356.7 264.6L531.4 212.3 M221.3 341.2L292.4 297.4Q323.5 278.2 358.5 267.7L534.2 215.0 M223.1 342.2L295.9 299.0Q326.3 281.0 360.2 270.8L537.0 217.7 M224.9 343.1L299.4 300.6Q329.1 283.7 361.9 273.9L539.8 220.5 M226.7 344.1L302.9 302.3Q331.9 286.4 363.6 276.9L542.7 223.2 M228.5 345.0L306.5 304.0Q334.8 289.2 365.3 280.0L545.5 226.0 M230.4 345.9L310.1 305.7Q337.6 291.9 367.1 283.1L548.3 228.7 M232.3 346.7L313.7 307.5Q340.4 294.6 368.8 286.1L551.1 231.4 M234.3 347.6L317.4 309.3Q343.2 297.4 370.5 289.2L554.0 234.2 M236.2 348.5L321.1 311.1Q346.1 300.1 372.2 292.3L556.8 236.9 M238.2 349.3L324.8 313.0Q348.9 302.9 373.9 295.3L559.6 239.6 M240.3 350.2L328.5 314.9Q351.7 305.6 375.6 298.4L562.4 242.4 M241.7 352.4L331.2 317.9Q353.6 309.3 376.8 302.5L564.8 247.5 M243.1 354.6L333.9 321.0Q355.6 312.9 377.9 306.6L567.2 252.6 M244.5 356.8L336.6 324.1Q357.6 316.6 379.0 310.7L569.5 257.7 M245.9 359.0L339.4 327.1Q359.5 320.3 380.0 314.7L571.8 262.8 M247.4 361.2L342.1 330.3Q361.4 324.0 381.1 318.8L574.2 267.9 M248.8 363.3L344.9 333.4Q363.4 327.6 382.2 322.8L576.5 273.0 M250.3 365.5L347.6 336.6Q365.4 331.3 383.3 326.8L578.8 278.1 M251.8 367.7L350.4 339.8Q367.3 335.0 384.4 330.8L581.1 283.2 M253.4 369.8L353.2 343.0Q369.2 338.6 385.5 334.8L583.4 288.3 M254.9 372.0L356.0 346.2Q371.2 342.3 386.5 338.8L585.7 293.4 M256.5 374.1L358.8 349.5Q373.1 346.0 387.6 342.8L588.0 298.5 M258.1 376.3L361.6 352.7Q375.1 349.7 388.7 346.8L590.2 303.6 M259.7 378.4L364.4 356.0Q377.1 353.3 389.7 350.7L592.5 308.7 M261.3 380.5L367.2 359.4Q379.0 357.0 390.8 354.6L594.7 313.9 M262.7 386.0L369.1 364.4Q380.3 362.1 391.5 359.9L595.9 318.5 M264.0 391.4L371.0 369.5Q381.6 367.3 392.2 365.1L597.1 323.1 M265.4 396.8L372.9 374.5Q382.9 372.4 392.9 370.4L598.3 327.8 M266.8 402.3L374.8 379.6Q384.2 377.6 393.6 375.6L599.5 332.4 M268.1 407.7L376.7 384.6Q385.5 382.8 394.3 380.9L600.7 337.0 M269.5 413.1L378.6 389.7Q386.8 387.9 395.0 386.1L601.9 341.7 M270.8 418.5L380.5 394.7Q388.1 393.1 395.7 391.4L603.1 346.3 M272.2 424.0L382.4 399.7Q389.4 398.2 396.4 396.7L604.3 351.0 M273.6 429.4L384.3 404.8Q390.7 403.4 397.1 401.9L605.5 355.6 M274.9 434.8L386.1 409.8Q392.0 408.5 397.9 407.2L606.6 360.2 M276.3 440.3L388.0 414.8Q393.3 413.6 398.6 412.5L607.8 364.9 M277.7 445.7L389.9 419.9Q394.6 418.8 399.3 417.7L609.0 369.5 M279.0 451.1L391.8 424.9Q395.9 423.9 400.0 423.0L610.2 374.2 M280.4 456.5L393.7 429.9Q397.2 429.1 400.7 428.3L611.4 378.8 M281.7 462.0L395.6 434.9Q398.5 434.2 401.4 433.6L612.6 383.4 M283.1 467.4L397.5 440.0Q399.8 439.4 402.1 438.8L613.7 388.1 M284.5 472.8L399.4 445.0Q401.1 444.6 402.8 444.1L614.9 392.7 M285.8 478.3L401.2 450.0Q402.4 449.7 403.6 449.4L616.1 397.4 M287.2 483.7L403.1 455.0Q403.7 454.9 404.3 454.7L617.3 402.0" fill="none" stroke="#231c19" stroke-width="0.75" stroke-linejoin="round"/></g>
<polygon points="258.0,130.4 310.0,178.0 349.4,203.3 368.0,229.7 395.8,251.3 420.3,271.6 461.1,359.0 445.6,378.4 405.6,460.0 364.0,394.0 331.0,355.0 317.6,318.7 283.2,293.2 246.5,273.0 232.4,253.0 202.8,236.4 164.0,207.7 145.2,193.3 157.3,165.6" fill="none" stroke="#3a2e28" stroke-width="0.8"/>
</svg><!--/TERRAIN_RV-->
  <div class="a" style="left:113px;top:521px;width:386px;height:9px;background:#f0f0f0;"></div>
  <!-- status bar -->
  <div class="a" style="left:0;top:530.5px;width:499px;height:11px;background:#d0d0d0;"></div>

  <!-- view tabs content -->
  <svg class="a" style="left:117px;top:89px" width="9" height="9" viewBox="0 0 9 9"><path d="M1 3.5L4.5 1L8 3.5V6.5L4.5 8.5L1 6.5z" fill="#dfe4ea" stroke="#555" stroke-width="0.9"/><path d="M1 3.5L4.5 5.5L8 3.5M4.5 5.5V8.5" fill="none" stroke="#555" stroke-width="0.7"/></svg>
  <div class="t" style="left:128px;top:88.5px;line-height:10px;color:#333">(3D)</div>
  <svg class="a" style="left:172px;top:90px" width="6" height="6" viewBox="0 0 6 6"><path d="M0.5 0.5L5.5 5.5M5.5 0.5L0.5 5.5" stroke="#222" stroke-width="1.1"/></svg>
  <svg class="a" style="left:182px;top:89px" width="9" height="9" viewBox="0 0 9 9"><rect x="0.5" y="0.5" width="8" height="8" fill="#f4f4f4" stroke="#999" stroke-width="0.8"/><rect x="0.5" y="0.5" width="4" height="8" fill="none" stroke="#999" stroke-width="0.7"/></svg>
  <div class="t" style="left:193px;top:88.5px;line-height:10px;color:#555">Site</div>
  <div class="a" style="left:495px;top:91px;width:0;height:0;border-left:2.5px solid transparent;border-right:2.5px solid transparent;border-top:3px solid #333;"></div>
  <div class="a" style="left:495px;top:90px;width:5px;height:1px;background:#333;"></div>
  <!-- scrollbars -->
  <svg class="a" style="left:494px;top:102px" width="5" height="4" viewBox="0 0 5 4"><path d="M0.5 3.5L2.5 1L4.5 3.5" fill="none" stroke="#444" stroke-width="0.9"/></svg>
  <div class="a" style="left:493px;top:306px;width:6px;height:9px;background:#cdcdcd;"></div>
  <svg class="a" style="left:494px;top:515px" width="5" height="4" viewBox="0 0 5 4"><path d="M0.5 0.5L2.5 3L4.5 0.5" fill="none" stroke="#444" stroke-width="0.9"/></svg>
  <div class="a" style="left:395px;top:522px;width:9px;height:8px;background:#cdcdcd;"></div>
<svg class="a" style="left:154px;top:522px" width="9" height="8" viewBox="0 0 9 8"><rect x="0.5" y="0.5" width="8" height="7" fill="#fff" stroke="#3a4452" stroke-width="1"/><path d="M2 3.5Q4.5 1.5 7 3.5" fill="none" stroke="#3a4452" stroke-width="0.8"/></svg>
<svg class="a" style="left:166px;top:522px" width="10" height="8" viewBox="0 0 10 8"><path d="M0.5 3L3 1H9.5V5.5L7 7.5H0.5z" fill="#8bbcec" stroke="#2f6fc0" stroke-width="0.9"/><path d="M0.5 3H7V7.5M7 3L9.5 1" fill="none" stroke="#2f6fc0" stroke-width="0.6"/></svg>
<svg class="a" style="left:177px;top:521px" width="9" height="9" viewBox="0 0 9 9"><circle cx="4" cy="4" r="2.5" fill="#f7d64a" stroke="#c99a10" stroke-width="0.7"/><path d="M4 0V1M0 4H1M1.2 1.2L2 2" stroke="#c99a10" stroke-width="0.6"/><path d="M5 6l3 3M8 6L5 9" stroke="#d9262c" stroke-width="1"/></svg>
<svg class="a" style="left:189px;top:521px" width="9" height="9" viewBox="0 0 9 9"><circle cx="3.5" cy="3" r="2.2" fill="#9cc7f0" stroke="#2f6fc0" stroke-width="0.8"/><path d="M1 7H5" stroke="#444" stroke-width="0.9"/><path d="M5 5.5l3 3M8 5.5L5 8.5" stroke="#d9262c" stroke-width="1"/></svg>
<svg class="a" style="left:200px;top:522px" width="9" height="8" viewBox="0 0 9 8"><path d="M1 5Q0 2 3 2Q4 0 6.5 1.5Q9 2 8 5z" fill="#fff" stroke="#4a6a90" stroke-width="0.8"/><circle cx="6" cy="5.5" r="1.5" fill="#6aaae8"/></svg>
<svg class="a" style="left:210px;top:521px" width="9" height="9" viewBox="0 0 9 9"><path d="M0.5 5L4 2L8 4V7H0.5z" fill="#6aaae8" stroke="#2f6fc0" stroke-width="0.7"/><path d="M2 2l5 5M7 2L2 7" stroke="#d9262c" stroke-width="1.1"/></svg>
<svg class="a" style="left:222px;top:521px" width="9" height="9" viewBox="0 0 9 9"><path d="M0.5 5L4 2L8 4V7H0.5z" fill="#6aaae8" stroke="#2f6fc0" stroke-width="0.7"/><circle cx="6.5" cy="2.5" r="1.8" fill="#fff" stroke="#2f6fc0" stroke-width="0.7"/></svg>
<svg class="a" style="left:233px;top:521px" width="9" height="9" viewBox="0 0 9 9"><circle cx="4.5" cy="4.5" r="3.8" fill="#e8eef5" stroke="#3a4452" stroke-width="0.9"/><path d="M4.5 2V7M2 4.5H7" stroke="#3a4452" stroke-width="0.7"/><circle cx="6.5" cy="6.5" r="1.6" fill="#3fae5a"/></svg>
<svg class="a" style="left:244px;top:522px" width="9" height="7" viewBox="0 0 9 7"><path d="M0.5 4Q2 0.5 4 3Q6 5.5 8.5 2" fill="none" stroke="#444" stroke-width="0.9"/><circle cx="7" cy="5" r="1.2" fill="#6aaae8"/></svg>
<svg class="a" style="left:254px;top:522px" width="5" height="8" viewBox="0 0 5 8"><path d="M2.5 7.5L0.8 3.5A1.8 1.8 0 1 1 4.2 3.5z" fill="#3a86e0"/></svg>
<svg class="a" style="left:263px;top:522px" width="9" height="8" viewBox="0 0 9 8"><rect x="0.5" y="0.5" width="6" height="6" fill="#fff" stroke="#333" stroke-width="1"/><circle cx="6" cy="5" r="1.8" fill="#fff" stroke="#333" stroke-width="0.8"/><path d="M7.3 6.3L8.8 7.8" stroke="#333" stroke-width="0.9"/></svg>
<svg class="a" style="left:274px;top:521px" width="9" height="9" viewBox="0 0 9 9"><path d="M0.5 6V3L4.5 0.8L8.5 3V6z" fill="#d8dde6" stroke="#555" stroke-width="0.8"/><circle cx="4.5" cy="5.5" r="2" fill="#e8403a"/><circle cx="7" cy="6.5" r="1.4" fill="#3a86e0"/></svg>
<svg class="a" style="left:285px;top:521px" width="9" height="9" viewBox="0 0 9 9"><path d="M0.5 3L3 1H8.5V6L6 8.5H0.5z" fill="#ddd" stroke="#444" stroke-width="0.8"/><path d="M0.5 3H6V8.5M6 3L8.5 1" fill="none" stroke="#444" stroke-width="0.6"/></svg>
<svg class="a" style="left:297px;top:521px" width="9" height="9" viewBox="0 0 9 9"><rect x="0.5" y="2" width="8" height="6" fill="#fff" stroke="#444" stroke-width="0.9"/><path d="M0.5 0.5V3M8.5 0.5V3M0.5 0.8H8.5" stroke="#444" stroke-width="0.8"/></svg>
  <svg class="a" style="left:310px;top:523px" width="4" height="5" viewBox="0 0 4 5"><path d="M3.5 0.5L1 2.5L3.5 4.5" fill="none" stroke="#333" stroke-width="0.9"/></svg>
  <svg class="a" style="left:487px;top:523px" width="4" height="5" viewBox="0 0 4 5"><path d="M0.5 0.5L3 2.5L0.5 4.5" fill="none" stroke="#333" stroke-width="0.9"/></svg>
  <!-- view cube -->
  <svg class="a" style="left:405px;top:120px" width="85" height="66" viewBox="405 120 85 66">
    <ellipse cx="445.8" cy="161.4" rx="34.5" ry="19.3" fill="#f7f7f7" stroke="#c9c9c9" stroke-width="0.7" stroke-dasharray="1.2 0.8"/>
    <ellipse cx="445.8" cy="161.4" rx="26.5" ry="13.8" fill="#fdfdfd" stroke="#d6d6d6" stroke-width="0.6"/>
    <path d="M413 172l6-2.5 1.8 3.5-6 2z" fill="#e6e6e6" stroke="#bbb" stroke-width="0.5"/>
    <path d="M469 170l6 2 -1.8 3.5-6-2z" fill="#e6e6e6" stroke="#bbb" stroke-width="0.5"/>
    <path d="M423 147l-4-2.5 2.5-2 4 2.5z" fill="#e6e6e6" stroke="#bbb" stroke-width="0.5"/>
    <path d="M468 147l4-2.5 2.5 2-4 2.5z" fill="#e6e6e6" stroke="#bbb" stroke-width="0.5"/>
    <ellipse cx="447" cy="165" rx="15" ry="5" fill="#ececec" opacity="0.8"/>
    <path d="M445.8 127.2L463.9 136.4L445.8 146L427.8 136.4z" fill="#f8f8f8" stroke="#8e8e8e" stroke-width="0.6"/>
    <path d="M427.8 136.4L445.8 146V168.3L428 158.6z" fill="#f0f0f0" stroke="#8e8e8e" stroke-width="0.6"/>
    <path d="M463.9 136.4L445.8 146V168.3L464 158.6z" fill="#e6e6e6" stroke="#8e8e8e" stroke-width="0.6"/>
    <text x="446" y="139" font-size="4.8" font-family="Liberation Sans" fill="#777" text-anchor="middle" transform="rotate(-28 446 137)">TOP</text>
    <text x="436" y="156" font-size="5" font-family="Liberation Sans" fill="#6a6a6a" text-anchor="middle" transform="rotate(28 436 155)">LEFT</text>
    <text x="455" y="157.5" font-size="5" font-family="Liberation Sans" fill="#6a6a6a" text-anchor="middle" transform="rotate(-28 455 156)">FRONT</text>
  </svg>
  <!-- nav bar -->
  <div class="a" style="left:474px;top:189px;width:19px;height:61px;background:#f5f5f5;border:1px solid #b5b5b5;border-radius:2px;"></div>
  <div class="a" style="left:487px;top:191px;width:3px;height:3px;border:0.8px solid #999;border-radius:50%;"></div>
  <div class="a" style="left:487px;top:245px;width:3px;height:3px;border:0.8px solid #999;border-radius:50%;"></div>
  <svg class="a" style="left:478px;top:200px" width="11" height="11" viewBox="0 0 11 11"><circle cx="5.5" cy="5.5" r="4.8" fill="#f0f0f0" stroke="#888" stroke-width="0.8"/><circle cx="5.5" cy="5.5" r="2.8" fill="#fff" stroke="#888" stroke-width="0.8"/></svg>
  <div class="a" style="left:482px;top:214px;width:0;height:0;border-left:1.5px solid transparent;border-right:1.5px solid transparent;border-top:2px solid #666;"></div>
  <div class="a" style="left:477px;top:218px;width:13px;height:1px;background:#ccc;"></div>
  <svg class="a" style="left:479px;top:222px" width="10" height="9" viewBox="0 0 10 9"><rect x="0.5" y="0.5" width="5" height="5" fill="#6cbf5a"/><circle cx="6" cy="5.5" r="1.8" fill="none" stroke="#555" stroke-width="0.8"/><path d="M7.3 6.8L9 8.5" stroke="#555" stroke-width="0.9"/></svg>
  <div class="a" style="left:482px;top:235px;width:0;height:0;border-left:1.5px solid transparent;border-right:1.5px solid transparent;border-top:2px solid #666;"></div>
  <!-- view control bar -->
  <div class="t" style="left:126px;top:521.5px;font-size:6.5px;line-height:9px;color:#222">1 : 100</div>
  <svg class="a" style="left:310px;top:523px" width="4" height="5" viewBox="0 0 4 5"><path d="M3.5 0.5L1 2.5L3.5 4.5" fill="none" stroke="#333" stroke-width="0.9"/></svg>
  <!-- status bar content -->
  <div class="t" style="left:0;top:533px;line-height:9px;color:#222">Full Navigation Wheel</div>
  <svg class="a" style="left:253px;top:533px" width="8" height="8" viewBox="0 0 8 8"><path d="M1 7.5V4L4 1L7 4V7.5z" fill="none" stroke="#999" stroke-width="0.8"/></svg>
  <div class="a" style="left:265px;top:532.5px;width:108px;height:9px;background:#fff;border:1px solid #c8c8c8;border-bottom:none;"></div>
  <svg class="a" style="left:366px;top:535.5px" width="6" height="4" viewBox="0 0 6 4"><path d="M0.5 0.5L3 3L5.5 0.5" fill="none" stroke="#aaa" stroke-width="0.9"/></svg>
  <svg class="a" style="left:377px;top:533px" width="8" height="9" viewBox="0 0 8 9"><path d="M1 8L5 1.5L7 3L3 8z" fill="#ddd" stroke="#999" stroke-width="0.7"/></svg>
  <div class="t" style="left:386px;top:533px;font-size:6.5px;line-height:9px;color:#333">:0</div>
  <svg class="a" style="left:404px;top:533px" width="9" height="9" viewBox="0 0 9 9"><rect x="0.5" y="0.5" width="8" height="8" fill="#fff" stroke="#3a4452" stroke-width="1"/><path d="M0.5 2.5H8.5M3 2.5V8.5" stroke="#3a4452" stroke-width="0.7"/></svg>
  <svg class="a" style="left:418px;top:533px" width="8" height="9" viewBox="0 0 8 9"><rect x="0.5" y="0.5" width="7" height="8" fill="#e4e4e4" stroke="#999" stroke-width="0.8"/></svg>
  <div class="a" style="left:430px;top:532.5px;width:69px;height:9px;background:#fff;border:1px solid #c8c8c8;border-bottom:none;"></div>
  <div class="t" style="left:433px;top:533px;line-height:9px;color:#999">Main Model</div>
</div>
<div class="a" style="left:499px;top:0;width:1px;height:541px;background:#707070;"></div>

<!-- ================= ARCHICAD ================= -->
<div class="a" id="ac" style="left:500px;top:0;width:499px;height:541px;background:#fff;overflow:hidden;">
  <div class="a" style="left:0;top:0;width:499px;height:1px;background:#8a8a8a;"></div>
  <!-- toolbars -->
  <div class="a" style="left:0;top:26px;width:499px;height:44px;background:#f0f0f0;"></div>
  <div class="a" style="left:0;top:44px;width:499px;height:1px;background:#dcdcdc;"></div>
  <!-- AC top -->
  <svg class="a" style="left:4.5px;top:4.5px" width="7" height="7" viewBox="0 0 7 7"><path d="M0.3 6.7L2.3 0.3H4.3L6.7 6.7z" fill="#23449a"/><path d="M2.3 0.3H4.3L6.7 6.7H5z" fill="#6b8fd8"/><path d="M1.5 6.7L3.5 2" stroke="#fff" stroke-width="0.5"/></svg>
  <div class="t" style="left:15px;top:3px;font-size:7px;line-height:10px;color:#222;">Untitled - ARCHICAD 23</div>
  <div class="a" style="left:439px;top:8px;width:5px;height:1px;background:#333;"></div>
  <div class="a" style="left:461px;top:5px;width:6px;height:6px;border:1px solid #333;"></div>
  <svg class="a" style="left:483px;top:4px" width="8" height="8" viewBox="0 0 8 8"><path d="M0.5 0.5L7.5 7.5M7.5 0.5L0.5 7.5" stroke="#333" stroke-width="0.9"/></svg>
  <div class="t" style="left:4px;top:16px;font-size:7px;line-height:10px;color:#222;">File</div>
  <div class="a" style="left:4px;top:25px;width:3px;height:0.7px;background:#444;"></div>
  <div class="t" style="left:20px;top:16px;font-size:7px;line-height:10px;color:#222;">Edit</div>
  <div class="a" style="left:20px;top:25px;width:3px;height:0.7px;background:#444;"></div>
  <div class="t" style="left:38px;top:16px;font-size:7px;line-height:10px;color:#222;">View</div>
  <div class="a" style="left:38px;top:25px;width:3px;height:0.7px;background:#444;"></div>
  <div class="t" style="left:58px;top:16px;font-size:7px;line-height:10px;color:#222;">Design</div>
  <div class="a" style="left:58px;top:25px;width:3px;height:0.7px;background:#444;"></div>
  <div class="t" style="left:85px;top:16px;font-size:7px;line-height:10px;color:#222;">Document</div>
  <div class="a" style="left:85px;top:25px;width:3px;height:0.7px;background:#444;"></div>
  <div class="t" style="left:121px;top:16px;font-size:7px;line-height:10px;color:#222;">Options</div>
  <div class="a" style="left:121px;top:25px;width:3px;height:0.7px;background:#444;"></div>
  <div class="t" style="left:150px;top:16px;font-size:7px;line-height:10px;color:#222;">Teamwork</div>
  <div class="a" style="left:150px;top:25px;width:3px;height:0.7px;background:#444;"></div>
  <div class="t" style="left:185px;top:16px;font-size:7px;line-height:10px;color:#222;">Window</div>
  <div class="a" style="left:185px;top:25px;width:3px;height:0.7px;background:#444;"></div>
  <div class="t" style="left:216px;top:16px;font-size:7px;line-height:10px;color:#222;">Help</div>
  <div class="a" style="left:216px;top:25px;width:3px;height:0.7px;background:#444;"></div>
  <div class="a" style="left:477.5px;top:22px;width:4px;height:1px;background:#333;"></div>
  <svg class="a" style="left:485px;top:18.5px" width="5" height="5" viewBox="0 0 5 5"><rect x="0.5" y="1.5" width="3" height="3" fill="none" stroke="#333" stroke-width="0.8"/><path d="M1.5 1.5V0.5H4.5V3.5H3.5" fill="none" stroke="#333" stroke-width="0.7"/></svg>
  <svg class="a" style="left:492px;top:19px" width="4" height="4" viewBox="0 0 4 4"><path d="M0.3 0.3L3.7 3.7M3.7 0.3L0.3 3.7" stroke="#333" stroke-width="0.9"/></svg>
  <div class="a" style="left:0;top:26px;width:499px;height:1px;background:#e2e2e2;"></div>
  <div class="a" style="left:2px;top:31px;width:1px;height:10px;background:#888;"></div>
  <svg class="a" style="left:5px;top:31px" width="10" height="8" viewBox="0 0 10 8"><path d="M2.5 1L0.8 3.2L3 5" fill="none" stroke="#555" stroke-width="0.9"/><path d="M1 3.2H6A3 2.4 0 0 1 6 8H3.5" fill="none" stroke="#555" stroke-width="0.9"/></svg>
  <svg class="a" style="left:18px;top:31px" width="10" height="8" viewBox="0 0 10 8"><path d="M7.5 1L9.2 3.2L7 5" fill="none" stroke="#c8c8c8" stroke-width="0.9"/><path d="M9 3.2H4A3 2.4 0 0 0 4 8H6.5" fill="none" stroke="#c8c8c8" stroke-width="0.9"/></svg>
  <div class="a" style="left:30px;top:28px;width:1px;height:15px;background:#a8a8a8;"></div>
  <svg class="a" style="left:36px;top:30px" width="10" height="11" viewBox="0 0 10 11"><circle cx="3.5" cy="3.5" r="2.8" fill="#fff" stroke="#4a90e2" stroke-width="0.9"/><circle cx="3.5" cy="3.5" r="1.3" fill="#111"/><path d="M5.5 5.5L8 8M8 1v5" stroke="#333" stroke-width="0.8"/><path d="M1.5 8h3v2h-3z" fill="#333"/></svg>
  <svg class="a" style="left:48px;top:30px" width="10" height="11" viewBox="0 0 10 11"><path d="M9 1L7 3" stroke="#333" stroke-width="1.3"/><path d="M7.5 2.5L1.5 8.5L1 10L2.5 9.5L8.5 3.5z" fill="#2c6fd6" stroke="#333" stroke-width="0.6"/></svg>
  <svg class="a" style="left:61px;top:30px" width="10" height="11" viewBox="0 0 10 11"><path d="M9.5 0.5L7 3M6 1.5l2.5 2.5" stroke="#333" stroke-width="0.8"/><path d="M7 3L2 8L1 10L3 9L8 4z" fill="#2c6fd6" stroke="#333" stroke-width="0.6"/></svg>
  <div class="a" style="left:74px;top:28px;width:1px;height:15px;background:#a8a8a8;"></div>
  <div class="a" style="left:77px;top:27px;width:72px;height:16px;background:#c3dcf5;border:1px solid #9cc3ea;"></div>
  <div class="a" style="left:92px;top:27px;width:1px;height:16px;background:#a9cdee;"></div>
  <div class="a" style="left:101px;top:27px;width:1px;height:16px;background:#a9cdee;"></div>
  <div class="a" style="left:124px;top:27px;width:1px;height:16px;background:#a9cdee;"></div>
  <div class="a" style="left:140px;top:27px;width:1px;height:16px;background:#a9cdee;"></div>
  <svg class="a" style="left:81px;top:29px" width="10" height="11" viewBox="0 0 10 11"><path d="M1 10.5V1L9.5 10.5z" fill="#e8eef6" stroke="#555" stroke-width="0.9"/><path d="M3 9V6.5L5.5 9z" fill="none" stroke="#555" stroke-width="0.6"/><path d="M0.8 10.5H9.5" stroke="#e08a30" stroke-width="0.8"/><path d="M0.8 1V10.5" stroke="#e08a30" stroke-width="0.6"/></svg>
  <div class="a" style="left:94px;top:34px;width:0;height:0;border-left:2.5px solid transparent;border-right:2.5px solid transparent;border-top:2.5px solid #222;"></div>
  <div class="a" style="left:118px;top:34px;width:0;height:0;border-left:2.5px solid transparent;border-right:2.5px solid transparent;border-top:2.5px solid #222;"></div>
  <div class="a" style="left:143px;top:34px;width:0;height:0;border-left:2.5px solid transparent;border-right:2.5px solid transparent;border-top:2.5px solid #222;"></div>
  <div class="a" style="left:166px;top:34px;width:0;height:0;border-left:2.5px solid transparent;border-right:2.5px solid transparent;border-top:2.5px solid #222;"></div>
  <div class="a" style="left:240px;top:34px;width:0;height:0;border-left:2.5px solid transparent;border-right:2.5px solid transparent;border-top:2.5px solid #222;"></div>
  <div class="a" style="left:442px;top:34px;width:0;height:0;border-left:2.5px solid transparent;border-right:2.5px solid transparent;border-top:2.5px solid #222;"></div>
  <svg class="a" style="left:105px;top:30px" width="10" height="10" viewBox="0 0 10 10"><path d="M0.5 6H9.5M3 8.5L8.5 2" stroke="#555" stroke-width="0.8"/><path d="M0.5 9H9.5" stroke="#3a86e0" stroke-width="0.8" stroke-dasharray="1 1"/></svg>
  <svg class="a" style="left:129px;top:29px" width="10" height="11" viewBox="0 0 10 11"><circle cx="2" cy="2" r="1.3" fill="#222"/><path d="M1.5 3.5V10H9.5V7.5A2.5 2.5 0 0 0 7 5H3.5" fill="#9aa3ad" stroke="#555" stroke-width="0.8"/><rect x="3.5" y="7" width="3.5" height="1.5" fill="#fff"/></svg>
  <svg class="a" style="left:152px;top:30px" width="10" height="10" viewBox="0 0 10 10"><path d="M3 0.5V9.5M7 0.5V9.5M0.5 3H9.5M0.5 7H9.5" stroke="#222" stroke-width="1"/></svg>
  <svg class="a" style="left:174px;top:31px" width="11" height="7" viewBox="0 0 11 7"><path d="M0.5 1.5H7.5L10.5 5.5H3.5z" fill="#dbe8f7" stroke="#a9c7ea" stroke-width="0.7"/></svg>
  <svg class="a" style="left:190px;top:30px" width="6" height="11" viewBox="0 0 6 11"><path d="M0.5 0.5L5.5 3V10.5L0.5 8z" fill="#9bbbe3" stroke="#2e6fd0" stroke-width="0.8"/></svg>
  <svg class="a" style="left:202px;top:29px" width="11" height="12" viewBox="0 0 11 12"><rect x="0.5" y="0.5" width="9" height="10" rx="1" fill="#f4f4f4" stroke="#c8c8c8" stroke-width="0.8"/><path d="M2 11.5H10.5V2" fill="none" stroke="#bfd6f0" stroke-width="0.8"/></svg>
  <div class="a" style="left:216px;top:34px;width:0;height:0;border-left:2.5px solid transparent;border-right:2.5px solid transparent;border-top:2.5px solid #222;"></div>
  <svg class="a" style="left:228px;top:29px" width="7" height="11" viewBox="0 0 7 11"><path d="M1.5 5V3A2 2 0 0 1 5.5 3V5" fill="none" stroke="#c8c8c8" stroke-width="0.9"/><rect x="0.5" y="5" width="6" height="5.5" fill="#f4f4f4" stroke="#c8c8c8" stroke-width="0.8"/></svg>
  <div class="a" style="left:246px;top:27px;width:14px;height:16px;background:#c3dcf5;border:1px solid #9cc3ea;"></div>
  <svg class="a" style="left:248px;top:29px" width="10" height="11" viewBox="0 0 10 11"><path d="M0.5 1.5H4L5 3.5H9.5V6" fill="none" stroke="#333" stroke-width="0.8"/><path d="M0.5 4L9 7.5" stroke="#333" stroke-width="0.8"/><path d="M0.5 9.5H6" stroke="#333" stroke-width="1"/><circle cx="7.5" cy="8" r="1.3" fill="#1e63d6"/></svg>
  <svg class="a" style="left:261px;top:30px" width="10" height="9" viewBox="0 0 10 9"><rect x="0.5" y="0.5" width="9" height="8" fill="none" stroke="#333" stroke-width="0.9"/><path d="M0.5 2.5H9.5M3.5 2.5V8.5M6 4h2M5 6h3" stroke="#333" stroke-width="0.7"/></svg>
  <svg class="a" style="left:276px;top:31px" width="7" height="7" viewBox="0 0 7 7"><path d="M0.5 0.5L2 2M6.5 0.5L5 2M0.5 6.5L2 5M6.5 6.5L5 5" stroke="#333" stroke-width="0.9"/><rect x="2" y="2" width="3" height="3" fill="none" stroke="#333" stroke-width="0.8"/></svg>
  <div class="a" style="left:286px;top:28px;width:1px;height:15px;background:#a8a8a8;"></div>
  <svg class="a" style="left:292px;top:31px" width="9" height="9" viewBox="0 0 9 9"><circle cx="1.5" cy="2" r="1" fill="#333"/><circle cx="1.5" cy="7" r="1" fill="#333"/><path d="M2 2.3L8.5 6.5M2 6.7L8.5 2.5" stroke="#333" stroke-width="0.8"/><path d="M0.5 0V9" stroke="#4a90e2" stroke-width="0.6" stroke-dasharray="1 1"/></svg>
  <svg class="a" style="left:305px;top:30px" width="9" height="10" viewBox="0 0 9 10"><path d="M0.5 3.5L3.5 0.5L6 3L3 6z" fill="#fff" stroke="#333" stroke-width="0.8"/><path d="M4.5 4.5L8.5 9" stroke="#333" stroke-width="1.1"/></svg>
  <svg class="a" style="left:317px;top:30px" width="7" height="10" viewBox="0 0 7 10"><path d="M0 0.5H7" stroke="#8fbef0" stroke-width="0.8"/><path d="M3.5 2V8M1.5 4L3.5 2L5.5 4M0.5 9.5H6.5" fill="none" stroke="#c0c0c0" stroke-width="0.8"/></svg>
  <svg class="a" style="left:331px;top:30px" width="8" height="10" viewBox="0 0 8 10"><path d="M1 9.5V1H7.5" fill="none" stroke="#c0c0c0" stroke-width="0.9"/></svg>
  <svg class="a" style="left:343px;top:30px" width="8" height="10" viewBox="0 0 8 10"><path d="M1 9.5Q1 1.5 7.5 1" fill="none" stroke="#c4c4c4" stroke-width="0.9"/></svg>
  <svg class="a" style="left:357px;top:30px" width="9" height="10" viewBox="0 0 9 10"><rect x="0.5" y="0.5" width="8" height="9" fill="#f4f4f4" stroke="#c4c4c4" stroke-width="0.8"/><path d="M4.5 0.5V5H8.5" fill="none" stroke="#c4c4c4" stroke-width="0.7"/></svg>
  <svg class="a" style="left:370px;top:30px" width="9" height="9" viewBox="0 0 9 9"><path d="M0.5 4L4.5 0.5L8.5 4V8.5H0.5z" fill="none" stroke="#b5b5b5" stroke-width="0.9"/></svg>
  <div class="a" style="left:382px;top:28px;width:1px;height:15px;background:#a8a8a8;"></div>
  <svg class="a" style="left:387px;top:30px" width="10" height="10" viewBox="0 0 10 10"><path d="M2 2H8V8H2z" fill="none" stroke="#444" stroke-width="0.7" stroke-dasharray="1.5 1"/><circle cx="2" cy="2" r="1" fill="#444"/><circle cx="8" cy="2" r="1" fill="#444"/><circle cx="2" cy="8" r="1" fill="#444"/><circle cx="8" cy="8" r="1" fill="#444"/><path d="M2 2L8 8M8 2L2 8" stroke="#444" stroke-width="0.6"/></svg>
  <svg class="a" style="left:400px;top:30px" width="10" height="10" viewBox="0 0 10 10"><ellipse cx="4" cy="7" rx="3.5" ry="2" fill="none" stroke="#4a90e2" stroke-width="0.9"/><path d="M2 8L8.5 1.5L9.5 2.5L3 9z" fill="#fff" stroke="#555" stroke-width="0.7"/></svg>
  <svg class="a" style="left:412px;top:30px" width="10" height="10" viewBox="0 0 10 10"><path d="M1 6Q0 3 3 2.5Q4 0 7 1.5Q9.5 2 9 5" fill="none" stroke="#555" stroke-width="0.8"/><rect x="5" y="5" width="4.5" height="4.5" fill="#3a86e0"/></svg>
  <svg class="a" style="left:427px;top:30px" width="11" height="10" viewBox="0 0 11 10"><path d="M0.5 5L4 1.5L7.5 5L4 8.5z" fill="#e4e4e4" stroke="#555" stroke-width="0.8"/><path d="M4 5L7 2L10.5 5.5L7 9z" fill="none" stroke="#3a86e0" stroke-width="0.9"/></svg>
  <div class="a" style="left:452px;top:31px;width:1px;height:10px;background:#a8a8a8;"></div>
  <svg class="a" style="left:457px;top:30px" width="11" height="11" viewBox="0 0 11 11"><path d="M1 4Q5.5 0 10 4" fill="none" stroke="#333" stroke-width="0.9"/><path d="M1 7Q5.5 11 10 7" fill="none" stroke="#333" stroke-width="1.2"/><path d="M3 3.5L8 6" stroke="#333" stroke-width="0.8"/></svg>
  <svg class="a" style="left:472px;top:30px" width="11" height="11" viewBox="0 0 11 11"><circle cx="3" cy="7" r="2.5" fill="none" stroke="#333" stroke-width="0.8"/><circle cx="7.5" cy="3.5" r="2.5" fill="none" stroke="#333" stroke-width="0.8"/><path d="M6 8Q9 9 10 6" fill="none" stroke="#333" stroke-width="0.8"/></svg>
  <div class="a" style="left:488px;top:28px;width:1px;height:15px;background:#a8a8a8;"></div>
  <div class="t" style="left:490px;top:27px;font-size:7px;line-height:9px;color:#333">Sele</div>
  <div class="a" style="left:0;top:44px;width:499px;height:1px;background:#dedede;"></div>
  <div class="a" style="left:2px;top:51px;width:1px;height:10px;background:#888;"></div>
  <div class="a" style="left:4px;top:55px;width:22px;height:10px;background:#e6e6e6;border:1px solid #c9c9c9;"></div>
  <div class="a" style="left:27px;top:55px;width:21px;height:10px;background:#e6e6e6;border:1px solid #c9c9c9;"></div>
  <div class="a" style="left:49px;top:55px;width:21px;height:10px;background:#c3dcf5;border:1px solid #5b9ae0;"></div>
  <div class="a" style="left:71px;top:50px;width:24px;height:15px;background:#e6e6e6;border:1px solid #cfcfcf;"></div>
  <svg class="a" style="left:7px;top:56px" width="10" height="8" viewBox="0 0 10 8"><path d="M0.5 6L5 3L9.5 1" stroke="#333" stroke-width="0.9"/><circle cx="2" cy="5" r="1" fill="#333"/><path d="M5 0.5h4" stroke="#777" stroke-width="0.6" stroke-dasharray="1 1"/></svg>
  <svg class="a" style="left:30px;top:56px" width="10" height="8" viewBox="0 0 10 8"><rect x="0.5" y="1.5" width="8" height="6" fill="none" stroke="#555" stroke-width="0.7" stroke-dasharray="1.2 0.8"/><circle cx="8" cy="2" r="1.2" fill="#333"/></svg>
  <svg class="a" style="left:55px;top:56px" width="10" height="9" viewBox="0 0 10 9"><ellipse cx="5" cy="5.5" rx="4" ry="3" fill="none" stroke="#555" stroke-width="0.9"/><path d="M3.5 0.5L5.5 5.5" stroke="#333" stroke-width="1"/><circle cx="5" cy="5.5" r="1.2" fill="#333"/></svg>
  <svg class="a" style="left:79px;top:53px" width="7" height="9" viewBox="0 0 7 9"><path d="M0.5 0.5V8L2.5 6L4 8.5L5 8L3.8 5.5H6.5z" fill="#fff" stroke="#333" stroke-width="0.8"/></svg>
  <div class="a" style="left:20px;top:58px;width:0;height:0;border-top:2px solid transparent;border-bottom:2px solid transparent;border-left:2.5px solid #222;"></div>
  <div class="a" style="left:43px;top:58px;width:0;height:0;border-top:2px solid transparent;border-bottom:2px solid transparent;border-left:2.5px solid #222;"></div>
  <div class="a" style="left:90px;top:56px;width:0;height:0;border-top:2px solid transparent;border-bottom:2px solid transparent;border-left:2.5px solid #222;"></div>
  <!-- tab row -->
  <div class="a" style="left:24px;top:70px;width:475px;height:11px;background:#d6d6d6;"></div>
  <div class="a" style="left:146px;top:70px;width:108px;height:11px;background:#fff;"></div>
  <!-- toolbox -->
  <div class="a" style="left:0;top:70px;width:24px;height:460px;background:#f0f0f0;border-right:1px solid #d0d0d0;"></div>
  <!-- canvas -->
  <div class="a" style="left:24px;top:81px;width:475px;height:438px;background:#e5e9ec;"></div>
  <!--TERRAIN_AC--><svg class="a" style="left:-500px;top:0" width="999" height="541" viewBox="0 0 999 541">
<defs><clipPath id="gc"><polygon points="723.3,115.8 774.5,162.2 810.6,186.7 841.8,223.5 877.9,255.4 920.4,339.7 907.8,357.0 873.8,433.1 835.5,368.0 807.0,333.5 789.3,296.0 756.8,271.0 722.8,250.2 711.0,231.0 679.9,214.7 625.1,170.4 633.8,145.5"/></clipPath>
<filter id="nz" x="0" y="0" width="100%" height="100%"><feTurbulence type="fractalNoise" baseFrequency="0.9" numOctaves="2" seed="3"/><feColorMatrix type="matrix" values="0 0 0 0 0.85  0 0 0 0 0.95  0 0 0 0 0.6  0 0 0 -1.6 1.0"/></filter>
<filter id="nz2" x="0" y="0" width="100%" height="100%"><feTurbulence type="fractalNoise" baseFrequency="0.15" numOctaves="3" seed="7"/><feColorMatrix type="matrix" values="0 0 0 0 0.22  0 0 0 0 0.36  0 0 0 0 0.08  3.2 0 0 0 -1.45"/></filter>
<linearGradient id="gsh" x1="620" y1="150" x2="900" y2="330" gradientUnits="userSpaceOnUse"><stop offset="0" stop-color="#3f6a1c" stop-opacity="0.35"/><stop offset="0.45" stop-color="#8fc060" stop-opacity="0.12"/><stop offset="1" stop-color="#3f6a1c" stop-opacity="0.15"/></linearGradient>
</defs>
<polygon points="564.0,317.7 713.5,231.8 991.7,392.6 842.2,478.5" fill="#d6e0ee"/>
<path d="M577.2 325.4L726.7 239.5 M590.5 333.0L740.0 247.1 M603.7 340.7L753.2 254.8 M617.0 348.3L766.5 262.4 M630.2 356.0L779.7 270.1 M643.5 363.6L793.0 277.7 M656.7 371.3L806.2 285.4 M670.0 379.0L819.5 293.1 M683.2 386.6L832.7 300.7 M696.5 394.3L846.0 308.4 M709.7 401.9L859.2 316.0 M723.0 409.6L872.5 323.7 M736.2 417.2L885.7 331.3 M749.5 424.9L899.0 339.0 M762.7 432.6L912.2 346.7 M776.0 440.2L925.5 354.3 M789.2 447.9L938.7 362.0 M802.5 455.5L952.0 369.6 M815.7 463.2L965.2 377.3 M829.0 470.8L978.5 384.9 M575.5 311.1L853.7 471.9 M587.0 304.5L865.2 465.3 M598.5 297.9L876.7 458.7 M610.0 291.3L888.2 452.1 M621.5 284.7L899.7 445.5 M633.0 278.1L911.2 438.9 M644.5 271.4L922.7 432.2 M656.0 264.8L934.2 425.6 M667.5 258.2L945.7 419.0 M679.0 251.6L957.2 412.4 M690.5 245.0L968.7 405.8 M702.0 238.4L980.2 399.2" stroke="#a8c0ea" stroke-width="0.75" fill="none"/>
<polygon points="564.0,317.7 713.5,231.8 991.7,392.6 842.2,478.5" fill="none" stroke="#a9c2ea" stroke-width="0.8"/>
<g clip-path="url(#gc)">
<rect x="600" y="100" width="340" height="345" fill="#64952f"/>
<rect x="600" y="100" width="340" height="345" filter="url(#nz2)" opacity="0.4"/>
<rect x="600" y="100" width="340" height="345" filter="url(#nz)" opacity="0.22"/>
<rect x="600" y="100" width="340" height="345" fill="url(#gsh)"/>
<path d="M634 146L720 127 M720 127L723 116 M720 127L688 160 M720 127L735 168 M720 127L774 162 M634 146L688 160 M688 160L650 175 M625 170L650 175 M650 175L700 205 M688 160L700 205 M688 160L735 168 M735 168L774 162 M735 168L760 195 M774 162L760 195 M760 195L811 187 M760 195L795 215 M811 187L795 215 M700 205L735 168 M700 205L745 232 M745 232L760 195 M680 215L700 205 M711 231L745 232 M723 250L745 232 M745 232L785 262 M795 215L785 262 M795 215L820 250 M842 224L820 250 M757 271L785 262 M785 262L820 250 M820 250L850 282 M878 255L850 282 M785 262L815 300 M789 296L815 300 M815 300L850 282 M850 282L880 315 M880 315L895 338 M920 340L895 338 M880 315L845 330 M815 300L845 330 M807 334L845 330 M845 330L860 365 M895 338L860 365 M908 357L860 365 M836 368L860 365 M860 365L870 395 M870 395L874 433 M895 338L908 357 M878 255L880 315 M870 395L850 410 M870 395L890 400 M650 175L680 215 M745 232L757 271 M815 300L807 334" stroke="#8f8616" stroke-width="0.7" opacity="0.72" fill="none"/>
</g>
<polygon points="723.3,115.8 774.5,162.2 810.6,186.7 841.8,223.5 877.9,255.4 920.4,339.7 907.8,357.0 873.8,433.1 835.5,368.0 807.0,333.5 789.3,296.0 756.8,271.0 722.8,250.2 711.0,231.0 679.9,214.7 625.1,170.4 633.8,145.5" fill="none" stroke="#7d8a24" stroke-width="0.6"/>
<g stroke="#111" stroke-width="1.15" fill="none"><path d="M852.2 444.5V430.3M852.2 444.5L839.5 437.3M852.2 444.5L863.8 438"/></g>
<text x="850.8" y="427.5" font-size="5.5" font-family="Liberation Sans" fill="#222">z</text>
<text x="836.5" y="436" font-size="5.5" font-family="Liberation Sans" fill="#222">y</text>
<text x="865" y="436.5" font-size="5.5" font-family="Liberation Sans" fill="#222">x</text>
<g stroke="#3d74e6" stroke-width="0.7" fill="#d5e2fb"><path d="M835.5 472L843 467.5L850 471.5L842.5 476z"/><path d="M838 470.5L845 474.5M840.5 469L847.5 473M838 473.5L845.5 469M840 474.7L847.5 470.2" fill="none"/></g>
</svg><!--/TERRAIN_AC-->
  
  <!-- nav bar -->
  <div class="a" style="left:24px;top:519px;width:475px;height:11px;background:#f0f0f0;"></div>
  <!-- status -->
  <div class="a" style="left:0;top:530px;width:499px;height:11px;background:#f3f3f3;"></div>

  <!-- AC content -->
  <svg class="a" style="left:26px;top:71px" width="10" height="9" viewBox="0 0 10 9"><rect x="0.5" y="0.5" width="4" height="3.5" rx="0.8" fill="none" stroke="#555" stroke-width="0.8"/><rect x="5.5" y="0.5" width="4" height="3.5" rx="0.8" fill="none" stroke="#555" stroke-width="0.8"/><rect x="0.5" y="5" width="4" height="3.5" rx="0.8" fill="none" stroke="#555" stroke-width="0.8"/><rect x="5.5" y="5" width="4" height="3.5" rx="0.8" fill="none" stroke="#555" stroke-width="0.8"/></svg>
  <div class="a" style="left:37px;top:70px;width:1px;height:11px;background:#c4c4c4;"></div>
  <svg class="a" style="left:39px;top:71px" width="10" height="9" viewBox="0 0 10 9"><path d="M0.5 8.5V0.5H4V3.5H9.5V8.5z" fill="#fff" stroke="#444" stroke-width="0.8"/></svg>
  <div class="t" style="left:50px;top:71px;font-size:7px;line-height:9px;color:#222;">[0. Ground Floor]</div>
  <svg class="a" style="left:149px;top:71px" width="9" height="10" viewBox="0 0 9 10"><path d="M1 2.5L4.5 0.8L8 2.5V7.5L4.5 9.2L1 7.5z" fill="#fff" stroke="#3a86e0" stroke-width="0.9"/><path d="M1 2.5L4.5 4.2L8 2.5M4.5 4.2V9.2" fill="none" stroke="#3a86e0" stroke-width="0.7"/></svg>
  <div class="t" style="left:159px;top:71px;font-size:7px;line-height:9px;color:#222;">Generic Axonometry [3D / All]</div>
  <svg class="a" style="left:246px;top:73px" width="5" height="5" viewBox="0 0 5 5"><path d="M0.5 0.5L4.5 4.5M4.5 0.5L0.5 4.5" stroke="#222" stroke-width="0.9"/></svg>
  <div class="a" style="left:254px;top:70px;width:1px;height:11px;background:#c4c4c4;"></div>
  <svg class="a" style="left:257px;top:71px" width="9" height="10" viewBox="0 0 9 10"><path d="M2 9.5V3L4.5 1L7 3V9.5M1 9.5H8M2.5 5H6.5M2.5 7H6.5" fill="none" stroke="#666" stroke-width="0.8"/><circle cx="7.5" cy="1.5" r="1.3" fill="#e02a1a"/></svg>
  <div class="t" style="left:267px;top:71px;font-size:7px;line-height:9px;color:#222;">[Action Center]</div>
  <div class="a" style="left:364px;top:70px;width:1px;height:11px;background:#c4c4c4;"></div>
  <svg class="a" style="left:366px;top:72px" width="9" height="8" viewBox="0 0 9 8"><path d="M0.5 7.5V3.5L4.5 0.5L8.5 3.5V7.5z" fill="#fff" stroke="#444" stroke-width="0.8"/></svg>
  <div class="t" style="left:376px;top:71px;font-size:7px;line-height:9px;color:#222;">[South Elevation]</div>
  <div class="a" style="left:473px;top:70px;width:26px;height:11px;background:#e6e6e6;"></div>
  <svg class="a" style="left:475px;top:71px" width="15" height="9" viewBox="0 0 15 9"><path d="M0.5 8.5V4L4 1.5L7 4V8.5z" fill="#cfe2f7" stroke="#3a86e0" stroke-width="0.8"/><path d="M6 8.5V4.5L10 1.5L14.5 4.5V8.5z" fill="#fff" stroke="#3a86e0" stroke-width="0.8"/></svg>
  <div class="a" style="left:493px;top:75px;width:0;height:0;border-left:2.5px solid transparent;border-right:2.5px solid transparent;border-top:2.5px solid #333;"></div>
  <div class="a" style="left:254.5px;top:84px;width:13px;height:1px;background:repeating-linear-gradient(90deg,#f0a070 0 2px,transparent 2px 3.6px);"></div>
  <div class="a" style="left:252px;top:82px;width:18px;height:5px;background:rgba(200,200,200,0.25);"></div>
  <div class="a" style="left:252px;top:509px;width:18px;height:7px;background:rgba(205,205,205,0.35);"></div><div class="a" style="left:255.5px;top:512px;width:13px;height:1px;background:repeating-linear-gradient(90deg,#f0a070 0 2px,transparent 2px 3.6px);"></div>
  <div class="a" style="left:490px;top:291px;width:7px;height:17px;background:rgba(205,205,205,0.35);"></div><div class="a" style="left:493px;top:292.5px;width:1px;height:13px;background:repeating-linear-gradient(180deg,#f0a070 0 2px,transparent 2px 3.6px);"></div>
  <div class="a" style="left:25px;top:291px;width:7px;height:17px;background:rgba(205,205,205,0.35);"></div><div class="a" style="left:29px;top:292.5px;width:1px;height:13px;background:repeating-linear-gradient(180deg,#f0a070 0 2px,transparent 2px 3.6px);"></div>
  <div class="a" style="left:7px;top:71.5px;width:11px;height:1.5px;background:#c8c8c8;"></div>
  <div class="a" style="left:0;top:74px;width:24px;height:15px;background:#c3dcf5;"></div>
  <svg class="a" style="left:9px;top:76px" width="7" height="11" viewBox="0 0 7 11"><path d="M0.5 0.5V9L2.5 7L4 10.5L5.2 10L3.8 6.6H6.5z" fill="#8a8a8a" stroke="#333" stroke-width="0.9"/></svg>
  <svg class="a" style="left:6px;top:92px" width="12" height="11" viewBox="0 0 12 11"><rect x="1" y="1" width="10" height="9" fill="none" stroke="#555" stroke-width="0.9" stroke-dasharray="1.5 1"/></svg>
  <div class="a" style="left:0;top:108.5px;width:24px;height:8px;background:#dcdcdc;"></div>
  <div class="t" style="left:1px;top:108px;font-size:6.5px;line-height:9px;color:#222;">Design</div>
  <svg class="a" style="left:6.5px;top:120.5px" width="11" height="11" viewBox="0 0 11 11"><path d="M1 3L10 1V9L1 10z" fill="#fff" stroke="#555" stroke-width="0.8"/></svg>
  <svg class="a" style="left:6.5px;top:136.5px" width="11" height="11" viewBox="0 0 11 11"><rect x="2.5" y="0.5" width="6" height="10" fill="#fff" stroke="#555" stroke-width="0.8"/><path d="M2.5 0.5L4 1.5V10.5" fill="none" stroke="#555" stroke-width="0.6"/><circle cx="7" cy="6" r="0.6" fill="#555"/></svg>
  <svg class="a" style="left:6.5px;top:151.5px" width="11" height="11" viewBox="0 0 11 11"><path d="M1 2L8 1V9L1 10z" fill="#fff" stroke="#555" stroke-width="0.8"/><path d="M4.5 1.5V9.5M1 6H8" stroke="#555" stroke-width="0.7"/></svg>
  <svg class="a" style="left:6.5px;top:167.5px" width="11" height="11" viewBox="0 0 11 11"><path d="M1 2L6 1L10 2V9L6 10L1 9z" fill="#fff" stroke="#555" stroke-width="0.8"/><path d="M6 1V10M1 6H10" stroke="#555" stroke-width="0.6"/></svg>
  <svg class="a" style="left:6.5px;top:183.5px" width="11" height="11" viewBox="0 0 11 11"><rect x="3.5" y="0.5" width="4" height="10" rx="1.5" fill="#fff" stroke="#555" stroke-width="0.8"/></svg>
  <svg class="a" style="left:6.5px;top:199.5px" width="11" height="11" viewBox="0 0 11 11"><path d="M0.5 2L10.5 6V8.5L0.5 4.5z" fill="#fff" stroke="#555" stroke-width="0.8"/></svg>
  <svg class="a" style="left:6.5px;top:214.5px" width="11" height="11" viewBox="0 0 11 11"><path d="M0.5 5L5 1.5L10.5 4L6 8.5z" fill="#fff" stroke="#555" stroke-width="0.8"/></svg>
  <svg class="a" style="left:6.5px;top:230.5px" width="11" height="11" viewBox="0 0 11 11"><path d="M1 3L4 1L10 5L7 8z" fill="#fff" stroke="#555" stroke-width="0.8"/><path d="M2 4L5 2M3.5 5L6.5 3M5 6L8 4M6 7L9 5" stroke="#555" stroke-width="0.6"/></svg>
  <svg class="a" style="left:6.5px;top:245.5px" width="11" height="11" viewBox="0 0 11 11"><path d="M1 9V4L10 1V6M1 6L10 3M4 3V8M7 2V7" fill="none" stroke="#555" stroke-width="0.8"/></svg>
  <svg class="a" style="left:6.5px;top:261.5px" width="11" height="11" viewBox="0 0 11 11"><path d="M0.5 6L4 1.5L7 3.5L10.5 7L4 10z" fill="#fff" stroke="#555" stroke-width="0.8"/><path d="M4 1.5L6 7" stroke="#555" stroke-width="0.6"/></svg>
  <svg class="a" style="left:6.5px;top:277.5px" width="11" height="11" viewBox="0 0 11 11"><path d="M0.5 5L10 1L6 10z" fill="#fff" stroke="#555" stroke-width="0.8"/><path d="M0.5 5L6 6L10 1" fill="none" stroke="#555" stroke-width="0.6"/></svg>
  <svg class="a" style="left:6.5px;top:293.5px" width="11" height="11" viewBox="0 0 11 11"><path d="M0.5 4L5 1L10.5 4.5L6 8z" fill="#fff" stroke="#555" stroke-width="0.8"/><path d="M0.5 6L6 10L10.5 6.5" fill="none" stroke="#555" stroke-width="0.8"/></svg>
  <svg class="a" style="left:6.5px;top:308.5px" width="11" height="11" viewBox="0 0 11 11"><rect x="1" y="1" width="9" height="9" fill="#fff" stroke="#555" stroke-width="0.8"/><path d="M4 1V10M7 1V10M1 4H10M1 7H10" stroke="#555" stroke-width="0.6"/></svg>
  <svg class="a" style="left:6.5px;top:323.5px" width="11" height="11" viewBox="0 0 11 11"><path d="M5.5 0.5L10 4L8 10H3L1 4z" fill="#fff" stroke="#555" stroke-width="0.8"/><path d="M5.5 0.5V10" stroke="#555" stroke-width="0.6"/><path d="M5.5 0.5L10 4L8 10H5.5z" fill="#bbb"/></svg>
  <svg class="a" style="left:6.5px;top:339.5px" width="11" height="11" viewBox="0 0 11 11"><path d="M3 0.5H6V5H9V10.5M3 0.5V10.5M3 5H6V10.5" fill="none" stroke="#555" stroke-width="0.8"/></svg>
  <svg class="a" style="left:6.5px;top:354.5px" width="11" height="11" viewBox="0 0 11 11"><path d="M1 1H7V4H10V10H1z" fill="#fff" stroke="#555" stroke-width="0.8"/><rect x="3" y="4" width="4" height="3" fill="none" stroke="#555" stroke-width="0.6"/></svg>
  <svg class="a" style="left:6.5px;top:370.5px" width="11" height="11" viewBox="0 0 11 11"><path d="M0.5 4L6 1L10.5 5L5 9z" fill="#fff" stroke="#555" stroke-width="0.8"/><path d="M3 2.5L8 7M2 6L8.5 3" stroke="#555" stroke-width="0.5"/></svg>
  <svg class="a" style="left:6.5px;top:400.5px" width="11" height="11" viewBox="0 0 11 11"><path d="M0.5 5.5H10.5M0.5 3V8M10.5 3V8" stroke="#aaa" stroke-width="0.8"/><text x="5.5" y="3.5" font-size="3.5" font-family="Liberation Sans" text-anchor="middle" fill="#999">1.2</text></svg>
  <svg class="a" style="left:6.5px;top:415.5px" width="11" height="11" viewBox="0 0 11 11"><circle cx="5" cy="6" r="3" fill="none" stroke="#aaa" stroke-width="0.8"/><path d="M5 1V10.5M0 6H10" stroke="#aaa" stroke-width="0.7"/></svg>
  <svg class="a" style="left:6.5px;top:431.5px" width="11" height="11" viewBox="0 0 11 11"><text x="5.5" y="10" font-size="11" font-family="Liberation Sans" text-anchor="middle" fill="#999">A</text></svg>
  <svg class="a" style="left:6.5px;top:446.5px" width="11" height="11" viewBox="0 0 11 11"><path d="M0.5 10L4 6.5M0.5 10H3M0.5 10V7.5" stroke="#999" stroke-width="0.8"/><text x="7.5" y="8" font-size="7.5" font-family="Liberation Sans" text-anchor="middle" fill="#999">A1</text></svg>
  <svg class="a" style="left:6.5px;top:461.5px" width="11" height="11" viewBox="0 0 11 11"><path d="M1 10V6Q1 1 10 1V10z" fill="#9a9a9a"/><path d="M3 10L10 3M6 10L10 6" stroke="#ddd" stroke-width="0.6"/></svg>
  <svg class="a" style="left:6.5px;top:477.5px" width="11" height="11" viewBox="0 0 11 11"><path d="M1 10L10 1" stroke="#999" stroke-width="0.9"/></svg>
  <svg class="a" style="left:6.5px;top:492.5px" width="11" height="11" viewBox="0 0 11 11"><circle cx="5.5" cy="5.5" r="4.5" fill="none" stroke="#999" stroke-width="0.8"/></svg>
  <svg class="a" style="left:6.5px;top:507.5px" width="11" height="11" viewBox="0 0 11 11"><path d="M1 10Q1 2 10 2" fill="none" stroke="#999" stroke-width="0.8"/><path d="M8 0.5L10 2L8 3.5" fill="none" stroke="#999" stroke-width="0.6"/></svg>
  <div class="a" style="left:0;top:387.5px;width:24px;height:8px;background:#dcdcdc;"></div>
  <div class="t" style="left:1px;top:387px;font-size:6.5px;line-height:9px;color:#222;">Docume</div>
  <div class="a" style="left:0;top:518px;width:24px;height:12px;background:#dcdcdc;"></div>
  <div class="t" style="left:2px;top:519px;font-size:6.5px;line-height:10px;color:#222;">More</div>
  <svg class="a" style="left:26px;top:520px" width="10" height="10" viewBox="0 0 10 10"><circle cx="5.5" cy="4.5" r="3.3" fill="none" stroke="#444" stroke-width="0.9"/><path d="M3 7L0.8 9.3" stroke="#444" stroke-width="1"/><path d="M1.5 2.5L2.5 4.5L4 3" fill="none" stroke="#444" stroke-width="0.8"/></svg>
  <svg class="a" style="left:38px;top:520px" width="10" height="10" viewBox="0 0 10 10"><circle cx="4.5" cy="4.5" r="3.3" fill="none" stroke="#bbb" stroke-width="0.9"/><path d="M7 7L9.2 9.3" stroke="#bbb" stroke-width="1"/></svg>
  <svg class="a" style="left:50px;top:520px" width="10" height="10" viewBox="0 0 10 10"><circle cx="4.5" cy="4.5" r="3.5" fill="none" stroke="#333" stroke-width="1"/><circle cx="4.5" cy="4.5" r="1.2" fill="#333"/><path d="M7 7L9.3 9.3" stroke="#333" stroke-width="1.1"/></svg>
  <svg class="a" style="left:65px;top:520px" width="9" height="9" viewBox="0 0 9 9"><path d="M0.8 4Q4.5 0.5 8.2 4" fill="none" stroke="#444" stroke-width="0.9"/><ellipse cx="4.5" cy="4.5" rx="3.5" ry="2" fill="none" stroke="#444" stroke-width="0.9"/><path d="M4.5 5V8.5" stroke="#444" stroke-width="0.8"/></svg>
  <svg class="a" style="left:78px;top:520px" width="6" height="9" viewBox="0 0 6 9"><circle cx="3" cy="1.5" r="1.2" fill="#c4c4c4"/><path d="M3 3V6M1 4.5H5M3 6L1.5 8.5M3 6L4.5 8.5" stroke="#c4c4c4" stroke-width="0.9"/></svg>
  <svg class="a" style="left:91px;top:520px" width="10" height="10" viewBox="0 0 10 10"><circle cx="4.5" cy="4.5" r="3.6" fill="none" stroke="#333" stroke-width="1"/><path d="M3 3L6 6M6 3L3 6" stroke="#333" stroke-width="0.9"/><path d="M7 7L9.3 9.3" stroke="#333" stroke-width="1.1"/></svg>
  <svg class="a" style="left:155px;top:520px" width="9" height="9" viewBox="0 0 9 9"><path d="M1 4L4 1L8 5L5 8z" fill="none" stroke="#c0c0c0" stroke-width="0.9"/></svg>
  <svg class="a" style="left:218px;top:521px" width="9" height="7" viewBox="0 0 9 7"><rect x="0.5" y="1" width="8" height="5" rx="1" fill="none" stroke="#444" stroke-width="0.9"/><path d="M2.5 3.5H6.5" stroke="#444" stroke-width="0.8" stroke-dasharray="1 0.8"/></svg>
  <svg class="a" style="left:280px;top:520px" width="9" height="9" viewBox="0 0 9 9"><path d="M0.5 3L3 0.5H8.5V6L6 8.5H0.5z" fill="#fff" stroke="#444" stroke-width="0.8"/><path d="M0.5 3H6V8.5M6 3L8.5 0.5" fill="none" stroke="#444" stroke-width="0.7"/></svg>
  <svg class="a" style="left:341px;top:520px" width="9" height="9" viewBox="0 0 9 9"><rect x="0.5" y="1" width="8" height="7" fill="#fff" stroke="#444" stroke-width="0.9"/><path d="M0.5 3.5H8.5M0.5 5.8H8.5M3 1V8M6 1V8" stroke="#444" stroke-width="0.6"/></svg>
  <svg class="a" style="left:405px;top:520px" width="6" height="9" viewBox="0 0 6 9"><path d="M0.8 0.5V5A2.2 2.2 0 0 0 5.2 5V0.5M3 7.5V9" fill="none" stroke="#444" stroke-width="0.9"/></svg>
  <div class="a" style="left:62px;top:520px;width:1px;height:9px;background:#cfcfcf;"></div>
  <div class="a" style="left:88px;top:520px;width:1px;height:9px;background:#cfcfcf;"></div>
  <div class="a" style="left:150px;top:520px;width:1px;height:9px;background:#cfcfcf;"></div>
  <div class="a" style="left:213px;top:520px;width:1px;height:9px;background:#cfcfcf;"></div>
  <div class="a" style="left:278px;top:520px;width:1px;height:9px;background:#cfcfcf;"></div>
  <div class="a" style="left:339px;top:520px;width:1px;height:9px;background:#cfcfcf;"></div>
  <div class="a" style="left:400px;top:520px;width:1px;height:9px;background:#cfcfcf;"></div>
  <div class="t" style="left:118px;top:519px;font-size:6.5px;line-height:9px;color:#999;">N/A</div>
  <div class="t" style="left:180px;top:519px;font-size:6.5px;line-height:9px;color:#999;">N/A</div>
  <div class="t" style="left:241px;top:519px;font-size:6.5px;line-height:9px;color:#222;">1:100</div>
  <div class="t" style="left:301px;top:519px;font-size:6.5px;line-height:9px;color:#222;">Custom</div>
  <div class="t" style="left:356px;top:519px;font-size:6.5px;line-height:9px;color:#222;">Entire Model</div>
  <div class="t" style="left:416px;top:519px;font-size:6.5px;line-height:9px;color:#222;">03 Architectu...</div>
  <div class="a" style="left:145px;top:522.5px;width:0;height:0;border-top:2px solid transparent;border-bottom:2px solid transparent;border-left:2.5px solid #aaa;"></div>
  <div class="a" style="left:207px;top:522.5px;width:0;height:0;border-top:2px solid transparent;border-bottom:2px solid transparent;border-left:2.5px solid #aaa;"></div>
  <div class="a" style="left:270px;top:522.5px;width:0;height:0;border-top:2px solid transparent;border-bottom:2px solid transparent;border-left:2.5px solid #222;"></div>
  <div class="a" style="left:333px;top:522.5px;width:0;height:0;border-top:2px solid transparent;border-bottom:2px solid transparent;border-left:2.5px solid #222;"></div>
  <div class="a" style="left:395px;top:522.5px;width:0;height:0;border-top:2px solid transparent;border-bottom:2px solid transparent;border-left:2.5px solid #222;"></div>
  <div class="a" style="left:458px;top:522.5px;width:0;height:0;border-top:2px solid transparent;border-bottom:2px solid transparent;border-left:2.5px solid #222;"></div>
  <div class="a" style="left:0;top:530px;width:499px;height:1px;background:#d6d6d6;"></div>
  <div class="t" style="left:2px;top:531px;font-size:7px;line-height:10px;color:#222;">Click an Element or Draw a Selection Area. Press and Hold Ctrl+Shift to Toggle Element/Sub-Element Selection.</div>
  <div class="a" style="left:420px;top:531px;width:1px;height:10px;background:#d0d0d0;"></div>
  <svg class="a" style="left:408px;top:532px" width="9" height="8" viewBox="0 0 9 8"><rect x="0.5" y="0.5" width="6" height="5" fill="#fff" stroke="#555" stroke-width="0.8"/><rect x="2.5" y="2.5" width="6" height="5" fill="#fff" stroke="#555" stroke-width="0.8"/></svg>
  <div class="t" style="left:427px;top:531px;font-size:7px;line-height:10px;color:#555;">GRAPHISOFT ID</div>
  <div class="a" style="left:498px;top:0;width:1px;height:541px;background:#8e8e8e;"></div>
  <div class="a" style="left:0;top:540px;width:499px;height:1px;background:#8e8e8e;"></div>
  <div class="a" style="left:486px;top:531px;width:1px;height:9px;background:#dcdcdc;"></div>
  <svg class="a" style="left:490px;top:533px" width="6" height="6" viewBox="0 0 6 6"><path d="M5.5 1.5L1.5 5.5M5.5 3.5L3.5 5.5" stroke="#b0b0b0" stroke-width="0.8"/></svg>
</div>

</body></html>
